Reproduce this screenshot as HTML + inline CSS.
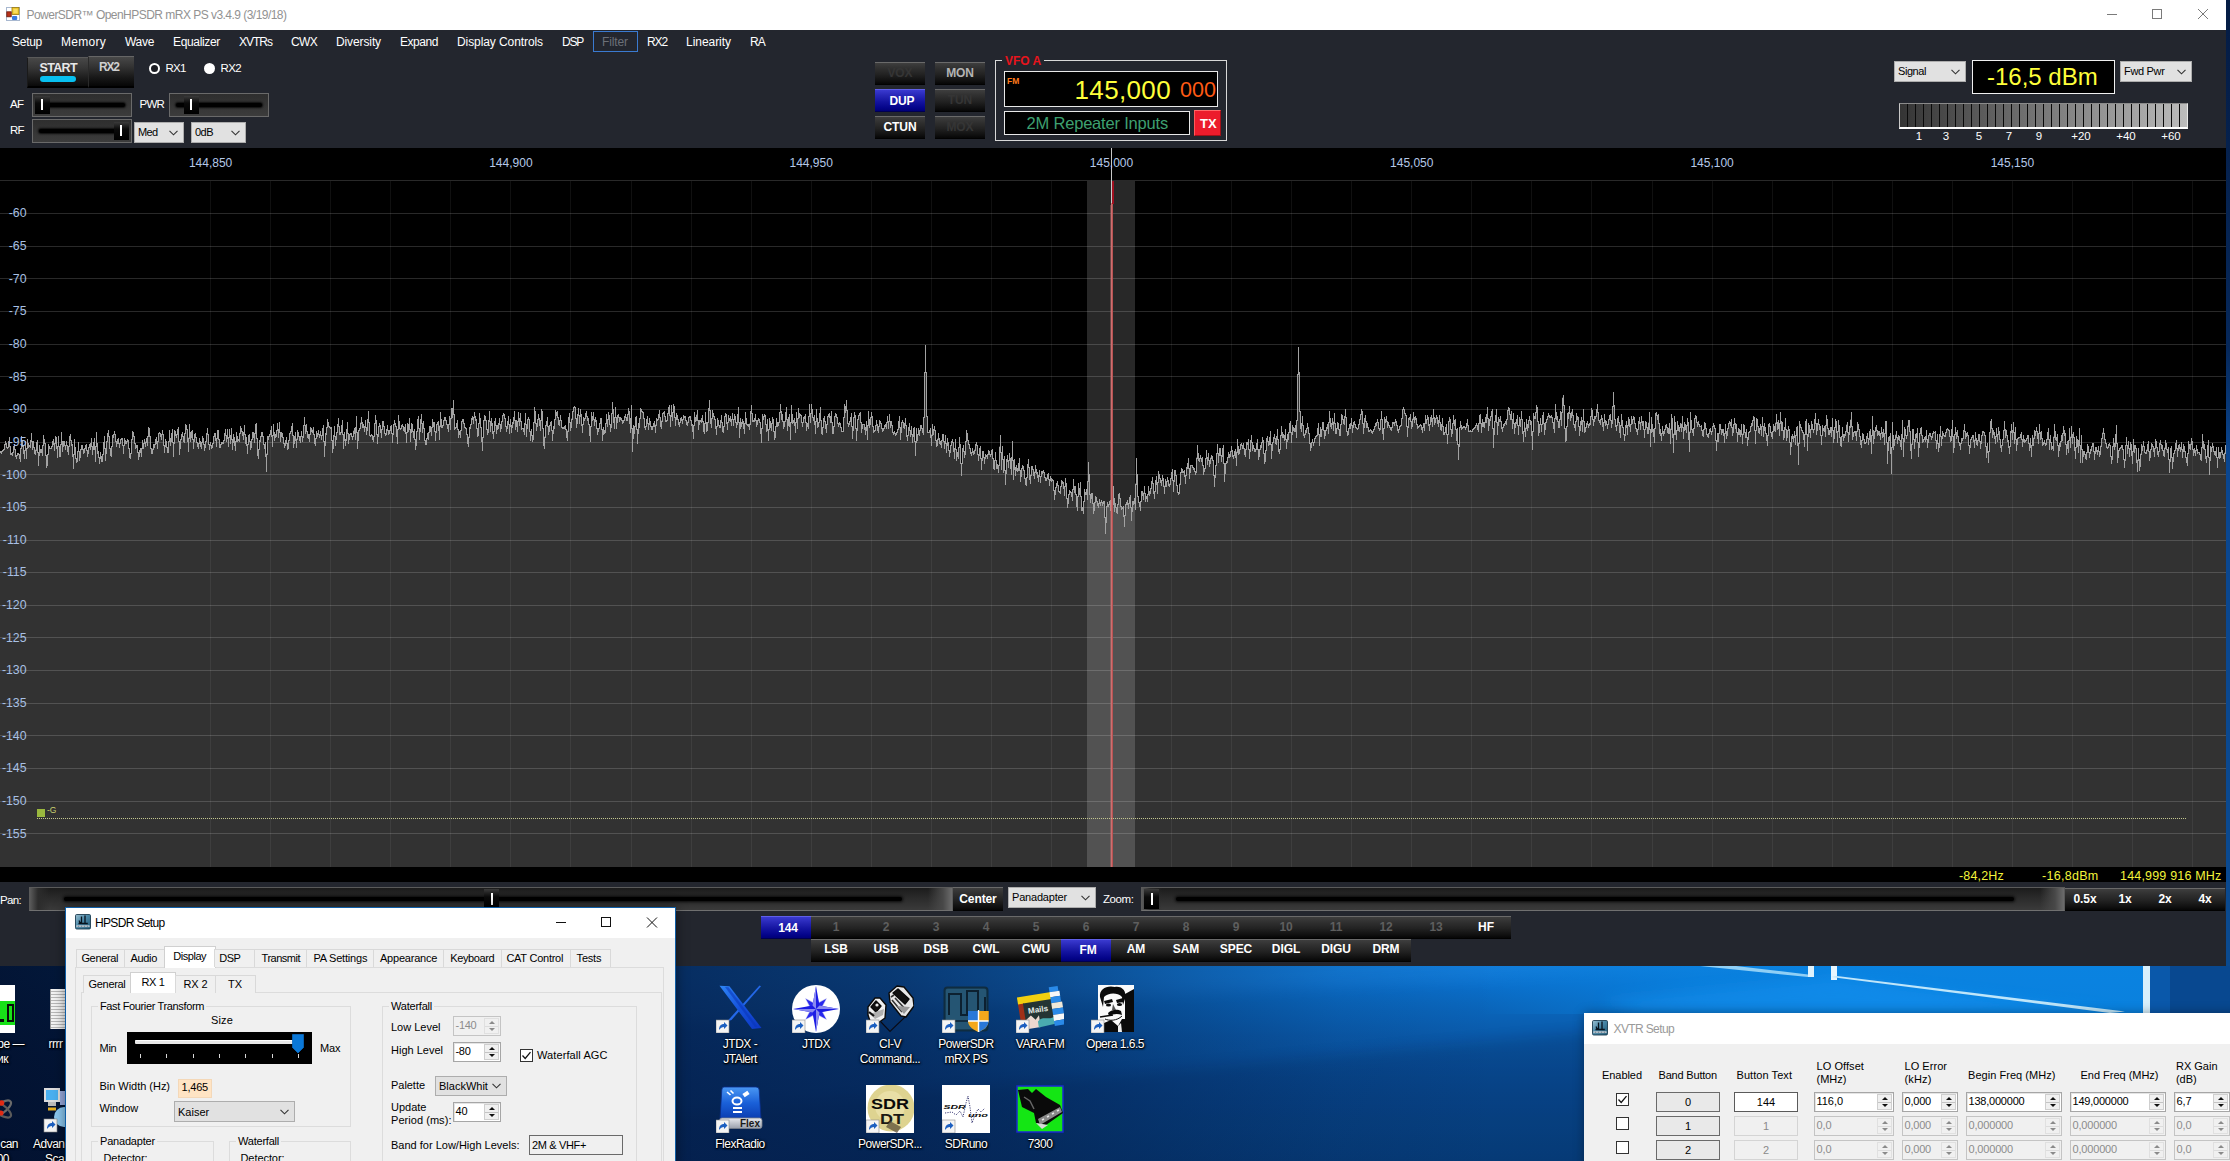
<!DOCTYPE html>
<html lang="en"><head><meta charset="utf-8"><title>PowerSDR</title>
<style>
*{box-sizing:border-box;margin:0;padding:0}
html,body{width:2230px;height:1161px;overflow:hidden}
body{position:relative;font-family:"Liberation Sans",sans-serif;font-size:12px;background:#0a4a9a;color:#000}
.a{position:absolute}
.t{position:absolute;white-space:nowrap;line-height:1}
#desk{left:0;top:0;width:2230px;height:1161px}
#main{left:0;top:0;width:2226px;height:966px;background:#23262e;overflow:hidden}
#tbar{left:0;top:0;width:2226px;height:30px;background:#fff}
.menu{color:#fff;font-size:12.5px;top:35px;text-shadow:0 0 1px rgba(255,255,255,.25)}
.lbl{color:#fff;font-size:12px}
.btn{position:absolute;background:linear-gradient(#3e3e3e 0%,#303030 25%,#222 55%,#101010 85%,#060606 100%);color:#fff;font-weight:bold;font-size:12px;text-align:center;border-top:1px solid #6a6a6a;border-bottom:1px solid #020202;white-space:nowrap;overflow:hidden;letter-spacing:-0.1px}
.btn.off{color:#353535}
.btn.dim{color:#5e5e5e}
.btn.mid{color:#b4b4b4}
.btn.blue{background:linear-gradient(#3a3ad0 0%,#2828b8 25%,#1414a0 55%,#04048a 85%,#000078 100%);border-top-color:#6060e8;border-bottom-color:#000050}
.btn.blue{padding-left:4px;padding-top:1px}
.btn.sep{border-left:1px solid #2c2c2c;border-right:1px solid #0a0a0a}
.sld{position:absolute;background:linear-gradient(#2e2e2e,#3c3c3c);border:1px solid #6a6a6a}
.sld i{position:absolute;left:6px;right:6px;top:50%;height:4px;margin-top:-2px;background:#000;border-radius:2px;box-shadow:0 0 2px 1px #0c0c0c}
.sld b{position:absolute;top:2px;bottom:2px;width:15px;background:linear-gradient(#3a3a3a,#0a0a0a 40%,#000)}
.sld b:after{content:"";position:absolute;left:6px;top:3px;bottom:4px;width:2px;background:#fff}
.cmb{position:absolute;background:#e1e1e1;border:1px solid #adadad;color:#000;font-size:11px;line-height:1}
.cmb span{position:absolute;left:3px;top:50%;transform:translateY(-50%);white-space:nowrap}
.cmb svg{position:absolute;right:5px;top:50%;margin-top:-3px}
.win{position:absolute;background:#f0f0f0}
.wt{position:absolute;left:0;top:0;right:0;height:30px;background:#fff}
.f11{font-size:11px}
.grp{position:absolute;border:1px solid #dcdcdc}
.grp>em{position:absolute;top:-8px;left:7px;background:#f0f0f0;padding:0 2px;font-style:normal;font-size:12px;line-height:14px;white-space:nowrap}
.spin{position:absolute;background:#fff;border:1px solid #a6a6a6;box-shadow:inset 1px 1px 0 #e4e4e4;font-size:11px}
.spin.dis{background:#f0f0f0;border-color:#c4c4c4;color:#8c8c8c;box-shadow:none}
.spin span{position:absolute;left:2px;top:50%;transform:translateY(-50%);white-space:nowrap}
.spin u{position:absolute;right:1px;top:1px;bottom:1px;width:15px;border:1px solid #cfcfcf;text-decoration:none;background:linear-gradient(#f0f0f0 0,#f0f0f0 7px,#c4c4c4 7px,#c4c4c4 8px,#f0f0f0 8px)}
.spin u:before,.spin u:after{content:"";position:absolute;left:3.5px;border:3px solid transparent}
.spin u:before{top:2px;border-bottom:3.5px solid #111;border-top:0}
.spin u:after{bottom:2px;border-top:3.5px solid #111;border-bottom:0}
.spin.dis u{border-color:#e0e0e0;background:linear-gradient(#f0f0f0 0,#f0f0f0 7px,#dcdcdc 7px,#dcdcdc 8px,#f0f0f0 8px)}
.spin.dis u:before{border-bottom-color:#8a8a8a}
.spin.dis u:after{border-top-color:#8a8a8a}
.chk{position:absolute;width:13px;height:13px;background:#fff;border:1px solid #333}
.tab{position:absolute;border:1px solid #d9d9d9;border-bottom:none;background:#f0f0f0;font-size:12px;text-align:center;white-space:nowrap}
.tab.sel{background:#fff;border-color:#d0d0d0}
.ico{position:absolute;width:48px;height:48px}
.il{position:absolute;color:#fff;font-size:12px;letter-spacing:-0.5px;text-align:center;width:90px;line-height:15px;text-shadow:1px 1px 2px #000,0 0 3px #000,0 1px 1px #000}
</style></head>
<body>

<svg class="a" id="desk" width="2230" height="1161" viewBox="0 0 2230 1161">
<defs>
<linearGradient id="dv" x1="0" y1="966" x2="0" y2="1161" gradientUnits="userSpaceOnUse">
<stop offset="0" stop-color="#0a76d4"/><stop offset="0.09" stop-color="#0a70cc"/><stop offset="0.2" stop-color="#0a66bc"/><stop offset="0.36" stop-color="#0a5aaa"/><stop offset="0.6" stop-color="#094e98"/><stop offset="1" stop-color="#084484"/></linearGradient>
<linearGradient id="dh" x1="0" y1="0" x2="2230" y2="0" gradientUnits="userSpaceOnUse">
<stop offset="0" stop-color="#020e2a" stop-opacity="0.93"/><stop offset="0.04" stop-color="#020e2a" stop-opacity="0.9"/><stop offset="0.3" stop-color="#041a44" stop-opacity="0.8"/><stop offset="0.4" stop-color="#041a44" stop-opacity="0.68"/><stop offset="0.47" stop-color="#041a44" stop-opacity="0.5"/><stop offset="0.53" stop-color="#041a44" stop-opacity="0.3"/><stop offset="0.6" stop-color="#041a44" stop-opacity="0.1"/><stop offset="0.67" stop-color="#041a44" stop-opacity="0"/></linearGradient>
<linearGradient id="dr" x1="1480" y1="0" x2="1850" y2="0" gradientUnits="userSpaceOnUse">
<stop offset="0" stop-color="#0a84e2" stop-opacity="0"/><stop offset="0.6" stop-color="#0a84e2" stop-opacity="0.7"/><stop offset="1" stop-color="#0a84e2" stop-opacity="0.9"/></linearGradient>
<filter id="b8" x="-5%" y="-50%" width="110%" height="200%"><feGaussianBlur stdDeviation="7"/></filter>
<filter id="b1"><feGaussianBlur stdDeviation="0.7"/></filter>
</defs>
<rect width="2230" height="1161" fill="#084484"/>
<rect y="940" width="2230" height="221" fill="url(#dv)"/>
<polygon points="500,900 1900,900 1900,958 500,1030" fill="#49a8ff" opacity="0.13" filter="url(#b8)"/>
<polygon points="500,1130 1700,1022 1700,1300 500,1300" fill="#021030" opacity="0.16" filter="url(#b8)"/>
<rect x="1380" y="940" width="770" height="74" fill="url(#dr)"/>
<rect y="940" width="2230" height="221" fill="url(#dh)"/>
<polygon points="1833,978 2123,1013 1640,1013 1600,1000" fill="#1894f4" opacity="0.45" filter="url(#b8)"/>
<polygon points="1736,966 1808,974.5 1808,977 1700,966" fill="#9fd8f8" opacity="0.9" filter="url(#b1)"/>
<rect x="1808" y="966" width="6" height="11" fill="#dff2fc"/>
<rect x="1831" y="966" width="6" height="14" fill="#e8f6fe"/>
<polygon points="1831,977 1837,976 2125,1011.5 2110,1013" fill="#bfe6fa" filter="url(#b1)"/>
<rect x="2143" y="966" width="7" height="48" fill="#d8f0fc"/>
<rect x="2150" y="966" width="80" height="48" fill="#0a58aa"/>
<rect x="2170" y="966" width="60" height="48" fill="#084890"/>
<linearGradient id="rs" x1="0" y1="0" x2="0" y2="966" gradientUnits="userSpaceOnUse"><stop offset="0" stop-color="#051c44"/><stop offset="0.36" stop-color="#06285a"/><stop offset="0.47" stop-color="#0a4690"/><stop offset="1" stop-color="#0a4a90"/></linearGradient>
<rect x="2226" y="0" width="4" height="966" fill="url(#rs)"/>
</svg>
<svg class="ico" style="left:716px;top:985px" width="48" height="48" viewBox="0 0 48 48"><defs><linearGradient id="jx" x1="0" y1="0" x2="1" y2="1"><stop offset="0" stop-color="#2f86f6"/><stop offset="0.5" stop-color="#1552dc"/><stop offset="1" stop-color="#0d37c4"/></linearGradient></defs><path d="M43.500 0.500 L45 1.200 L15.500 35 L11 36.500 Z" fill="#2468e8"/><path d="M3.500 0.800 L13.500 1.300 L45.500 43 L36 44 Z" fill="url(#jx)"/><path d="M9 2 L12.500 2.200 L41.500 41.500 L39 42 Z" fill="#0a34b8" opacity="0.55"/><g transform="translate(0,35)"><rect width="13" height="13" fill="#f4f4f4" stroke="#8a8a8a" stroke-width="0.6"/><path d="M3 10 C3 6 5 4 8 4 L8 2 L11.5 5.5 L8 9 L8 7 C6 7 4.5 8 3 10Z" fill="#1c5fc0"/></g></svg>
<div class="il" style="left:695px;top:1037px">JTDX -<br>JTAlert</div>
<svg class="ico" style="left:792px;top:985px" width="48" height="48" viewBox="0 0 48 48"><circle cx="24" cy="24" r="24" fill="#fff"/><path d="M24 9 L27 17 L35 13 L31 21 L39 24 L31 27 L35 35 L27 31 L24 39 L21 31 L13 35 L17 27 L9 24 L17 21 L13 13 L21 17Z" fill="#b4b4f2"/><path d="M14 14 L23 19 L19 23Z M34 14 L29 23 L25 19Z M34 34 L25 29 L29 25Z M14 34 L19 25 L23 29Z" fill="#2828ee"/><path d="M24 1 L27.500 20.500 L47 24 L27.500 27.500 L24 47 L20.500 27.500 L1 24 L20.500 20.500Z" fill="#1c1ce4"/><path d="M24 1 L24 24 L20.500 20.500Z M47 24 L24 24 L27.500 20.500Z M24 47 L24 24 L27.500 27.500Z M1 24 L24 24 L20.500 27.500Z" fill="#8a8af0"/><g transform="translate(0,35)"><rect width="13" height="13" fill="#f4f4f4" stroke="#8a8a8a" stroke-width="0.6"/><path d="M3 10 C3 6 5 4 8 4 L8 2 L11.5 5.5 L8 9 L8 7 C6 7 4.5 8 3 10Z" fill="#1c5fc0"/></g></svg>
<div class="il" style="left:771px;top:1037px">JTDX</div>
<svg class="ico" style="left:866px;top:985px" width="48" height="48" viewBox="0 0 48 48"><path d="M15 37 L24 46.500 L40 31" fill="none" stroke="#0a0a14" stroke-width="1.1"/><g stroke="#0a0a0a" stroke-width="1.4" stroke-linejoin="round"><path d="M23 8 L31 1 L38 2 L47 13 L48 21 L40 32 L35 31 L24 17Z" fill="#e8e8e8"/><path d="M27 8 L32 4 L43 14 L39 19Z" fill="#111"/><path d="M26 15 L36 27 M29 13 L40 25 M25 12 L28 10" stroke="#333" stroke-width="1.6"/><path d="M31 21 L38 29 L44 22" fill="#9a9a9a" stroke="none"/><path d="M2 22 L9 13 L14 13 L20 20 L19 33 L12 38 L4 36 L2 30Z" fill="#f0f0f0"/><path d="M5 22 L10 16 L15 21 L10 27Z" fill="#111"/><circle cx="11" cy="20" r="1.6" fill="#e8e8e8" stroke="none"/><path d="M4 29 L9 34 L17 30 L18 24" fill="#b0b0b0" stroke="none"/><path d="M3 27 L8 31" stroke="#111" stroke-width="2.2"/></g><g transform="translate(0,35)"><rect width="13" height="13" fill="#f4f4f4" stroke="#8a8a8a" stroke-width="0.6"/><path d="M3 10 C3 6 5 4 8 4 L8 2 L11.5 5.5 L8 9 L8 7 C6 7 4.5 8 3 10Z" fill="#1c5fc0"/></g></svg>
<div class="il" style="left:845px;top:1037px">CI-V<br>Command...</div>
<svg class="ico" style="left:942px;top:985px" width="48" height="48" viewBox="0 0 48 48"><rect x="2.500" y="2.500" width="43" height="43" rx="3" fill="#1f4c68" stroke="#0f2c40" stroke-width="2"/><rect x="4" y="4" width="40" height="40" rx="2" fill="#2a5c7c" opacity="0.6"/><path d="M7 30 L7 9 L19 9 L19 30 L25 30 L25 6 L36 6 L36 30 L43 30 L43 12" fill="none" stroke="#0c2030" stroke-width="2"/><path d="M7 36 L43 36" stroke="#0c2030" stroke-width="1.500"/><path d="M26 26 L46.500 26 L46.500 36 C46.500 42 41 45 36.500 47 C32 45 26 42 26 36Z" fill="#f4a81c"/><path d="M36.500 26 L46.500 26 L46.500 36 L36.500 36Z" fill="#f4a81c"/><path d="M26 26 L36.500 26 L36.500 36 L26 36Z" fill="#2a78d8"/><path d="M36.500 36 L46.500 36 C46.500 42 41 45 36.500 47Z" fill="#2a78d8"/><path d="M36.500 25 L36.500 47 M26 36 L46.500 36" stroke="#fff" stroke-width="1.400"/><g transform="translate(0,35)"><rect width="13" height="13" fill="#f4f4f4" stroke="#8a8a8a" stroke-width="0.6"/><path d="M3 10 C3 6 5 4 8 4 L8 2 L11.5 5.5 L8 9 L8 7 C6 7 4.5 8 3 10Z" fill="#1c5fc0"/></g></svg>
<div class="il" style="left:921px;top:1037px">PowerSDR<br>mRX PS</div>
<svg class="ico" style="left:1016px;top:985px" width="48" height="48" viewBox="0 0 48 48"><g transform="rotate(-9 24 24)"><rect x="3" y="9" width="36" height="8" fill="#f2d010"/><rect x="3" y="16" width="6" height="22" fill="#a03018"/><rect x="8" y="16" width="29" height="19" fill="#243434"/><path d="M8 33 L14 29 L18 34 L22 30 L22 42 L8 42Z" fill="#ecd8d0"/><path d="M20 36 C26 30 32 38 38 33 L38 41 L20 42Z" fill="#4aacb0"/><rect x="36" y="4" width="9" height="5" fill="#2a8ae8"/><rect x="36" y="9" width="10" height="5" fill="#f8f8f8"/><rect x="36" y="14" width="10" height="6" fill="#2a8ae8"/><rect x="36" y="20" width="11" height="6" fill="#f0e8d8"/><rect x="36" y="26" width="11" height="6" fill="#2a8ae8"/><rect x="36" y="32" width="12" height="6" fill="#f8f8f8"/><rect x="36" y="38" width="12" height="5" fill="#2a8ae8"/><text x="12" y="27" font-family="Liberation Sans,sans-serif" font-size="8" font-weight="bold" fill="#e4ece8">Mails</text></g><g transform="translate(0,35)"><rect width="13" height="13" fill="#f4f4f4" stroke="#8a8a8a" stroke-width="0.6"/><path d="M3 10 C3 6 5 4 8 4 L8 2 L11.5 5.5 L8 9 L8 7 C6 7 4.5 8 3 10Z" fill="#1c5fc0"/></g></svg>
<div class="il" style="left:995px;top:1037px">VARA FM</div>
<svg class="ico" style="left:1091px;top:985px" width="48" height="48" viewBox="0 0 48 48"><rect x="7" y="0" width="36" height="47" fill="#fafafa"/><path d="M34 9 L43 4 L43 47 L34 47Z" fill="#0a0a0a"/><path d="M9 12 C8 4 16 0 24 2 C31 1 36 6 34 14 L32 20 L31 12 C26 7 17 8 13 12 L12 22Z" fill="#0a0a0a"/><path d="M13 16 L21 14 L22 17 L14 19Z M25 15 L32 13 L33 17 L26 18Z" fill="#0a0a0a"/><ellipse cx="17.500" cy="20" rx="2.600" ry="1.500" fill="#0a0a0a"/><ellipse cx="28.500" cy="19.500" rx="2.600" ry="1.500" fill="#0a0a0a"/><path d="M22 19 L21 25 L25 25Z" fill="#555"/><path d="M17 28 C21 24 27 24 30 26 L31 30 C26 28 22 29 18 31Z" fill="#0a0a0a"/><path d="M9 32 L22 30" stroke="#0a0a0a" stroke-width="1.600"/><path d="M14 34 C18 36 26 36 31 31" fill="none" stroke="#0a0a0a" stroke-width="1"/><path d="M12 47 L13 38 L20 35 L27 41 L31 34 L34 34 L34 47Z" fill="#0a0a0a"/><path d="M27 41 L30 38 L31 47 L27 47Z" fill="#eee"/><g transform="translate(0,35)"><rect width="13" height="13" fill="#f4f4f4" stroke="#8a8a8a" stroke-width="0.6"/><path d="M3 10 C3 6 5 4 8 4 L8 2 L11.5 5.5 L8 9 L8 7 C6 7 4.5 8 3 10Z" fill="#1c5fc0"/></g></svg>
<div class="il" style="left:1070px;top:1037px">Opera 1.6.5</div>
<svg class="ico" style="left:716px;top:1085px" width="48" height="48" viewBox="0 0 48 48"><defs><linearGradient id="fx" x1="0" y1="0" x2="0" y2="1"><stop offset="0" stop-color="#4a98f4"/><stop offset="0.5" stop-color="#1a60d8"/><stop offset="1" stop-color="#0a3cb0"/></linearGradient><linearGradient id="fs" x1="0" y1="0" x2="0" y2="1"><stop offset="0" stop-color="#e8eaee"/><stop offset="1" stop-color="#9aa0ac"/></linearGradient></defs><path d="M8 2 H40 Q43 2 43.200 5 L45 34 H4 L5.800 5 Q6 2 8 2Z" fill="url(#fx)" stroke="#0a2c88" stroke-width="0.8"/><ellipse cx="21" cy="16" rx="4.500" ry="3.500" fill="none" stroke="#fff" stroke-width="2"/><path d="M11 7 L14.500 10 M14.500 5.500 L17.500 8.500" stroke="#fff" stroke-width="1.600"/><rect x="27" y="7" width="6" height="4" fill="#fff" transform="rotate(-35 30 9)"/><rect x="17" y="22" width="9" height="2" fill="#fff"/><rect x="17" y="26" width="9" height="2" fill="#fff"/><rect x="3.500" y="33" width="42.500" height="10.500" rx="2.500" fill="url(#fs)" stroke="#7a808c" stroke-width="0.8"/><text x="44" y="42" text-anchor="end" font-family="Liberation Sans,sans-serif" font-size="10" font-weight="bold" fill="#1a1a1a">Flex</text><g transform="translate(0,35)"><rect width="13" height="13" fill="#f4f4f4" stroke="#8a8a8a" stroke-width="0.6"/><path d="M3 10 C3 6 5 4 8 4 L8 2 L11.5 5.5 L8 9 L8 7 C6 7 4.5 8 3 10Z" fill="#1c5fc0"/></g></svg>
<div class="il" style="left:695px;top:1137px">FlexRadio</div>
<svg class="ico" style="left:866px;top:1085px" width="48" height="48" viewBox="0 0 48 48"><rect width="48" height="48" fill="#fff"/><circle cx="25" cy="23" r="23.500" fill="#ded390"/><circle cx="24" cy="21" r="15" fill="#e9dfa6"/><text x="5" y="23.500" font-family="Liberation Sans,sans-serif" font-size="15" font-weight="bold" fill="#0a0a0a" textLength="38" lengthAdjust="spacingAndGlyphs">SDR</text><text x="14" y="39" font-family="Liberation Sans,sans-serif" font-size="15" font-weight="bold" fill="#1c1a14" textLength="24" lengthAdjust="spacingAndGlyphs">DT</text><path d="M24 36 L35 42 L31 48 L20 42Z" fill="#5c5038" opacity="0.75"/><g transform="translate(0,35)"><rect width="13" height="13" fill="#f4f4f4" stroke="#8a8a8a" stroke-width="0.6"/><path d="M3 10 C3 6 5 4 8 4 L8 2 L11.5 5.5 L8 9 L8 7 C6 7 4.5 8 3 10Z" fill="#1c5fc0"/></g></svg>
<div class="il" style="left:845px;top:1137px">PowerSDR...</div>
<svg class="ico" style="left:942px;top:1085px" width="48" height="48" viewBox="0 0 48 48"><rect width="48" height="48" fill="#fff"/><path d="M3 28 L10 27 L14 30 L18 26 L21 32 L24 18 L26 11 L28 22 L30 38 L33 30 L36 24 L39 27 L43 23" fill="none" stroke="#2a2a6a" stroke-width="0.9" stroke-dasharray="1.2 1.2"/><text x="1.500" y="23.500" font-family="Liberation Sans,sans-serif" font-size="5.500" font-weight="bold" font-style="italic" fill="#0a0a0a" textLength="22" lengthAdjust="spacingAndGlyphs">SDR</text><text x="26" y="32" font-family="Liberation Sans,sans-serif" font-size="6" font-weight="bold" font-style="italic" fill="#0a0a0a" textLength="20" lengthAdjust="spacingAndGlyphs">uno</text><g transform="translate(0,35)"><rect width="13" height="13" fill="#f4f4f4" stroke="#8a8a8a" stroke-width="0.6"/><path d="M3 10 C3 6 5 4 8 4 L8 2 L11.5 5.5 L8 9 L8 7 C6 7 4.5 8 3 10Z" fill="#1c5fc0"/></g></svg>
<div class="il" style="left:921px;top:1137px">SDRuno</div>
<svg class="ico" style="left:1016px;top:1085px" width="48" height="48" viewBox="0 0 48 48"><rect x="1" y="1" width="46" height="46" fill="#14e614" stroke="#1a2ad0" stroke-width="1.500"/><path d="M2 5 L12 4 L16 8 L20 4 L30 12 L44 20 L47 28 L30 40 L20 38 L18 28 L6 22Z" fill="#0a0a0a"/><path d="M22 34 L44 22 L46 27 L24 40Z" fill="#8a8a8a"/><path d="M26 35 L28 34 M31 32 L33 31 M36 29 L38 28 M41 26 L43 25" stroke="#e8e8e8" stroke-width="1.600"/><path d="M20 38 L26 44 L32 40" fill="#d8d8d8"/><path d="M8 12 L14 16 L18 24" stroke="#666" stroke-width="1.500" fill="none"/></svg>
<div class="il" style="left:995px;top:1137px">7300</div>
<div class="a" style="left:0;top:985px;width:15px;height:48px;background:#fff"></div>
<div class="a" style="left:0;top:1001px;width:15px;height:24px;background:#18e018"></div>
<div class="a" style="left:0;top:1019px;width:4px;height:3px;background:#0a0a0a"></div>
<div class="a" style="left:6.500px;top:1004px;width:7px;height:18px;border:2px solid #0a0a0a"></div>
<div class="il" style="left:-66px;top:1037px;width:90px;text-align:right">pe —</div>
<div class="il" style="left:-82px;top:1052px;width:90px;text-align:right">ик</div>
<div class="a" style="left:50px;top:989px;width:16px;height:40px;background:repeating-linear-gradient(#f4f4f4 0 2px,#b8b8b8 2px 3px);border-left:1px solid #999"></div>
<div class="il" style="left:48.500px;top:1037px;width:40px;text-align:left">rrrr</div>
<svg class="a" style="left:0;top:1094px" width="14" height="30" viewBox="0 0 14 30"><ellipse cx="0" cy="15" rx="13" ry="5" fill="none" stroke="#6a6a6a" stroke-width="2.200" transform="rotate(-35 0 15)"/><ellipse cx="0" cy="15" rx="13" ry="5" fill="none" stroke="#5a5a5a" stroke-width="2.200" transform="rotate(35 0 15)"/><circle cx="1.500" cy="9" r="2.800" fill="#e02a14"/><circle cx="1" cy="19" r="2.600" fill="#e02a14"/></svg>
<div class="il" style="left:-72px;top:1137px;width:90px;text-align:right">can</div>
<div class="il" style="left:-81px;top:1152px;width:90px;text-align:right">00</div>
<svg class="a" style="left:42px;top:1087px" width="24" height="46" viewBox="0 0 24 46"><rect x="3" y="2" width="14" height="12" fill="#4ab0f0" stroke="#ddd" stroke-width="2"/><rect x="6" y="15" width="8" height="4" fill="#bbb"/><path d="M18 4 L24 4 L24 18 L18 18Z" fill="#9ad"/><circle cx="22" cy="30" r="10" fill="#8cc8f0"/><path d="M6 22 L14 22" stroke="#e8b020" stroke-width="3"/><rect x="2" y="32" width="13" height="13" fill="#f4f4f4" stroke="#888" stroke-width="0.6"/><path d="M5 42 C5 38 7 36 10 36 L10 34 L13.500 37.500 L10 41 L10 39 C8 39 6.500 40 5 42Z" fill="#1c5fc0"/></svg>
<div class="il" style="left:33px;top:1137px;width:60px;text-align:left">Advan</div>
<div class="il" style="left:45px;top:1152px;width:60px;text-align:left">Sca</div>
<div class="a" id="main">
<svg class="a" style="left:0;top:0" width="2226" height="890" viewBox="0 0 2226 890" shape-rendering="crispEdges">
<rect x="0" y="148" width="2226" height="734" fill="#000"/>
<polygon points="0,867 0,450.5 1,453.2 2,449.7 3,450.0 4,447.7 5,440.5 6,445.3 7,448.0 8,445.3 9,437.1 10,454.2 11,453.1 12,454.6 13,448.8 14,443.6 15,454.4 16,458.0 17,452.6 18,453.1 19,454.7 20,461.2 21,435.6 22,443.9 23,448.6 24,458.1 25,441.5 26,457.5 27,439.5 28,446.9 29,444.7 30,447.2 31,432.8 32,448.8 33,440.7 34,452.5 35,454.1 36,445.0 37,439.7 38,464.7 39,445.4 40,452.0 41,449.4 42,454.9 43,435.4 44,441.8 45,443.5 46,466.5 47,464.3 48,444.4 49,447.1 50,448.0 51,448.4 52,443.7 53,438.7 54,450.1 55,435.7 56,439.0 57,456.7 58,435.7 59,456.2 60,455.9 61,432.0 62,450.9 63,441.9 64,441.1 65,448.6 66,440.8 67,448.9 68,453.9 69,437.5 70,433.9 71,445.4 72,443.5 73,468.4 74,439.2 75,455.1 76,461.7 77,460.3 78,442.4 79,460.3 80,452.8 81,444.8 82,445.2 83,452.7 84,451.6 85,445.4 86,444.0 87,456.3 88,450.0 89,444.1 90,449.0 91,437.8 92,453.5 93,445.4 94,438.2 95,460.7 96,432.2 97,453.0 98,450.8 99,462.7 100,452.4 101,460.4 102,460.8 103,447.6 104,436.3 105,459.9 106,445.5 107,436.0 108,430.3 109,441.4 110,453.9 111,456.2 112,435.5 113,437.0 114,431.2 115,436.2 116,445.9 117,439.8 118,438.1 119,447.2 120,439.4 121,438.7 122,437.9 123,453.1 124,437.5 125,443.2 126,442.4 127,438.9 128,440.4 129,455.5 130,458.1 131,448.2 132,430.6 133,433.2 134,438.5 135,447.8 136,446.3 137,444.5 138,459.3 139,452.1 140,448.4 141,455.7 142,439.8 143,447.7 144,438.8 145,445.5 146,437.6 147,445.0 148,427.3 149,429.0 150,443.7 151,453.0 152,453.2 153,443.8 154,446.7 155,440.9 156,437.3 157,447.9 158,433.8 159,432.4 160,432.9 161,438.5 162,430.2 163,438.3 164,452.4 165,439.5 166,442.0 167,451.5 168,451.7 169,429.6 170,445.4 171,436.0 172,429.2 173,455.8 174,430.4 175,431.7 176,437.4 177,430.4 178,427.4 179,453.8 180,442.4 181,435.5 182,431.8 183,439.4 184,442.2 185,424.3 186,426.2 187,431.3 188,451.0 189,424.0 190,440.7 191,432.7 192,429.8 193,448.4 194,434.5 195,432.8 196,441.3 197,443.4 198,447.7 199,438.0 200,444.3 201,448.3 202,436.3 203,439.1 204,449.7 205,443.4 206,437.9 207,427.8 208,440.1 209,448.6 210,442.0 211,447.5 212,445.8 213,439.7 214,433.0 215,433.6 216,446.1 217,429.7 218,430.7 219,446.5 220,447.2 221,441.5 222,442.4 223,442.6 224,437.1 225,429.4 226,440.9 227,429.2 228,446.1 229,428.9 230,442.7 231,428.2 232,449.2 233,434.0 234,439.9 235,449.8 236,431.5 237,440.5 238,439.4 239,440.9 240,425.5 241,430.3 242,431.0 243,439.0 244,425.3 245,443.3 246,437.4 247,452.6 248,435.2 249,433.9 250,448.5 251,446.3 252,432.2 253,432.1 254,441.7 255,425.1 256,422.7 257,452.7 258,457.6 259,439.8 260,440.9 261,431.7 262,432.1 263,439.6 264,448.3 265,441.6 266,470.8 267,436.4 268,438.9 269,433.6 270,433.9 271,425.8 272,446.2 273,423.7 274,440.0 275,434.4 276,436.2 277,422.9 278,436.8 279,421.7 280,441.5 281,431.5 282,434.6 283,439.4 284,446.9 285,443.7 286,436.5 287,448.9 288,446.2 289,433.8 290,433.0 291,428.8 292,423.4 293,447.1 294,439.8 295,432.5 296,447.3 297,429.9 298,434.3 299,438.5 300,442.4 301,430.5 302,440.6 303,433.2 304,417.4 305,433.4 306,424.5 307,436.6 308,434.3 309,441.2 310,427.4 311,429.5 312,432.3 313,426.8 314,440.9 315,444.6 316,430.8 317,435.7 318,430.5 319,437.2 320,431.3 321,438.7 322,431.6 323,425.0 324,456.4 325,432.9 326,434.4 327,419.2 328,425.5 329,425.9 330,428.4 331,427.2 332,452.4 333,444.0 334,426.3 335,444.9 336,433.8 337,429.3 338,418.1 339,434.3 340,433.9 341,430.3 342,420.0 343,447.9 344,432.4 345,444.9 346,436.0 347,422.2 348,443.3 349,434.3 350,433.6 351,433.0 352,438.7 353,433.6 354,427.5 355,438.8 356,416.1 357,447.8 358,431.4 359,428.3 360,427.9 361,417.3 362,427.4 363,423.6 364,430.8 365,420.4 366,434.4 367,426.5 368,411.1 369,433.4 370,436.4 371,433.5 372,436.8 373,440.7 374,431.8 375,414.7 376,424.8 377,442.7 378,428.3 379,423.5 380,427.1 381,436.8 382,421.1 383,421.3 384,431.3 385,434.9 386,433.3 387,424.9 388,434.1 389,431.9 390,427.3 391,424.9 392,441.7 393,427.0 394,420.5 395,424.7 396,428.2 397,443.4 398,415.0 399,427.9 400,429.0 401,427.3 402,423.7 403,428.5 404,431.3 405,423.5 406,441.7 407,423.0 408,431.3 409,417.6 410,440.7 411,423.3 412,425.5 413,437.1 414,428.8 415,449.4 416,440.3 417,422.3 418,415.9 419,439.2 420,423.3 421,414.2 422,432.1 423,420.8 424,435.1 425,444.0 426,443.9 427,432.7 428,439.0 429,426.0 430,426.2 431,434.9 432,418.6 433,426.1 434,422.5 435,439.7 436,425.2 437,422.5 438,420.6 439,439.4 440,411.9 441,426.0 442,427.3 443,422.1 444,417.2 445,416.7 446,422.7 447,425.5 448,431.2 449,416.5 450,428.5 451,408.4 452,417.1 453,399.7 454,429.1 455,427.5 456,425.8 457,420.1 458,437.1 459,430.6 460,436.9 461,422.3 462,418.8 463,419.3 464,426.1 465,427.7 466,427.8 467,439.9 468,446.0 469,427.1 470,428.1 471,420.0 472,415.7 473,422.8 474,412.0 475,419.9 476,419.2 477,436.2 478,433.1 479,412.7 480,422.9 481,432.0 482,450.1 483,423.7 484,415.4 485,416.7 486,423.1 487,434.2 488,429.8 489,410.7 490,431.2 491,418.5 492,428.1 493,438.2 494,423.7 495,417.6 496,432.7 497,424.8 498,427.9 499,418.1 500,430.7 501,424.6 502,416.9 503,412.8 504,415.5 505,420.4 506,430.6 507,425.3 508,415.8 509,432.7 510,419.0 511,431.9 512,422.3 513,422.9 514,411.3 515,429.3 516,420.4 517,430.7 518,411.5 519,424.6 520,413.5 521,428.7 522,427.9 523,428.5 524,433.8 525,412.9 526,435.8 527,420.9 528,417.3 529,421.6 530,440.3 531,428.8 532,440.9 533,436.3 534,407.2 535,415.6 536,430.2 537,422.8 538,414.4 539,420.6 540,430.3 541,408.9 542,413.5 543,441.8 544,447.7 545,425.4 546,423.9 547,417.2 548,434.1 549,427.1 550,423.5 551,421.2 552,439.7 553,426.3 554,427.7 555,409.8 556,414.8 557,411.5 558,422.8 559,425.2 560,415.4 561,424.8 562,428.3 563,426.8 564,427.9 565,424.6 566,433.2 567,440.4 568,420.7 569,413.4 570,430.1 571,423.5 572,413.7 573,408.7 574,405.9 575,408.4 576,426.7 577,419.5 578,408.1 579,422.7 580,409.0 581,419.2 582,431.7 583,417.0 584,419.8 585,415.7 586,411.0 587,420.3 588,418.1 589,429.2 590,440.6 591,412.3 592,420.5 593,412.5 594,424.7 595,417.3 596,422.7 597,433.9 598,428.6 599,427.3 600,417.8 601,418.0 602,440.1 603,427.4 604,432.7 605,432.1 606,414.2 607,426.3 608,412.2 609,417.0 610,430.6 611,424.4 612,402.1 613,415.1 614,428.1 615,406.9 616,427.8 617,415.2 618,414.1 619,420.8 620,417.3 621,418.1 622,422.6 623,422.0 624,418.0 625,413.5 626,420.0 627,420.4 628,408.5 629,414.2 630,431.5 631,404.6 632,451.1 633,424.8 634,433.4 635,418.1 636,416.1 637,442.9 638,423.0 639,427.4 640,408.3 641,410.6 642,412.2 643,411.7 644,424.9 645,429.0 646,422.6 647,416.0 648,429.1 649,418.3 650,423.1 651,429.0 652,428.7 653,423.9 654,421.3 655,431.5 656,417.8 657,420.1 658,417.9 659,410.0 660,423.6 661,428.0 662,413.2 663,412.4 664,411.3 665,420.9 666,421.4 667,418.9 668,408.1 669,405.0 670,426.0 671,405.3 672,420.0 673,403.6 674,409.1 675,424.6 676,413.2 677,416.8 678,422.1 679,425.6 680,418.6 681,416.5 682,422.5 683,414.8 684,417.4 685,415.7 686,423.5 687,425.2 688,417.9 689,416.6 690,415.7 691,424.6 692,424.4 693,438.1 694,412.5 695,421.4 696,418.6 697,410.4 698,428.7 699,420.1 700,420.0 701,422.4 702,414.5 703,428.1 704,433.2 705,412.5 706,431.3 707,429.2 708,415.6 709,400.2 710,419.1 711,426.9 712,409.8 713,415.3 714,415.8 715,421.3 716,434.0 717,417.6 718,423.0 719,427.5 720,426.2 721,414.5 722,429.1 723,432.1 724,419.4 725,413.0 726,415.9 727,429.3 728,415.2 729,420.0 730,415.8 731,425.3 732,413.0 733,424.5 734,414.2 735,417.0 736,426.7 737,421.2 738,407.3 739,437.4 740,417.6 741,426.3 742,419.2 743,422.5 744,433.3 745,412.5 746,423.9 747,425.0 748,423.5 749,429.0 750,418.0 751,404.6 752,420.6 753,420.1 754,421.3 755,414.1 756,425.6 757,423.2 758,417.7 759,420.8 760,423.6 761,442.2 762,414.4 763,419.4 764,413.5 765,416.8 766,431.1 767,419.2 768,440.1 769,418.5 770,424.3 771,429.8 772,416.6 773,421.7 774,439.5 775,434.6 776,418.2 777,426.0 778,424.2 779,420.1 780,403.6 781,419.1 782,414.5 783,428.0 784,424.2 785,418.0 786,406.6 787,430.4 788,420.3 789,413.7 790,439.0 791,405.4 792,422.6 793,421.2 794,418.4 795,432.1 796,411.5 797,427.6 798,408.5 799,416.9 800,413.9 801,417.0 802,426.4 803,417.3 804,417.7 805,413.9 806,429.9 807,422.8 808,428.3 809,404.2 810,421.9 811,403.9 812,413.1 813,420.2 814,415.3 815,432.9 816,409.2 817,426.6 818,424.8 819,418.7 820,406.8 821,432.4 822,433.9 823,420.4 824,416.3 825,425.2 826,431.7 827,415.9 828,415.5 829,413.0 830,421.8 831,411.1 832,432.2 833,432.9 834,418.7 835,413.3 836,414.8 837,419.1 838,426.4 839,421.7 840,424.2 841,429.8 842,431.5 843,430.2 844,403.8 845,412.3 846,399.9 847,420.8 848,426.0 849,422.5 850,420.3 851,413.5 852,438.1 853,422.3 854,412.0 855,417.2 856,439.6 857,420.7 858,416.4 859,413.0 860,412.4 861,432.0 862,423.8 863,424.1 864,424.4 865,433.8 866,420.9 867,438.8 868,411.2 869,426.7 870,421.3 871,412.4 872,419.6 873,432.3 874,430.0 875,429.6 876,419.6 877,429.0 878,431.8 879,419.8 880,422.6 881,424.0 882,431.2 883,428.0 884,427.3 885,423.5 886,427.6 887,416.2 888,427.8 889,414.2 890,427.4 891,420.6 892,430.3 893,434.0 894,430.9 895,435.2 896,432.1 897,432.1 898,426.1 899,416.3 900,438.6 901,424.8 902,419.5 903,425.2 904,428.4 905,417.5 906,432.1 907,440.4 908,430.2 909,423.4 910,436.1 911,425.6 912,442.2 913,429.1 914,427.4 915,455.3 916,428.1 917,440.1 918,428.5 919,434.5 920,425.9 921,424.7 922,430.7 923,433.8 924,400.0 925,345.0 926,400.0 927,431.5 928,432.4 929,431.6 930,428.4 931,445.3 932,423.7 933,434.0 934,426.4 935,432.7 936,446.4 937,444.4 938,432.7 939,443.1 940,441.3 941,446.6 942,434.3 943,434.4 944,447.8 945,434.5 946,452.4 947,438.5 948,445.3 949,455.5 950,447.5 951,443.1 952,439.3 953,444.7 954,457.9 955,439.0 956,459.8 957,451.5 958,457.9 959,436.7 960,451.5 961,475.0 962,451.0 963,444.9 964,456.7 965,452.0 966,429.8 967,436.3 968,442.8 969,445.3 970,451.5 971,454.9 972,448.2 973,454.1 974,452.3 975,446.7 976,441.8 977,448.4 978,459.7 979,450.5 980,446.3 981,469.3 982,450.6 983,451.5 984,462.5 985,454.1 986,455.0 987,457.9 988,450.1 989,452.5 990,456.2 991,451.2 992,449.4 993,466.5 994,469.0 995,451.8 996,467.9 997,463.8 998,472.4 999,457.8 1000,435.4 1001,469.1 1002,445.6 1003,472.1 1004,456.2 1005,483.8 1006,462.1 1007,455.1 1008,466.9 1009,453.5 1010,462.5 1011,473.9 1012,440.9 1013,478.6 1014,459.2 1015,474.8 1016,464.5 1017,471.3 1018,468.2 1019,458.4 1020,481.5 1021,471.0 1022,465.4 1023,466.0 1024,473.4 1025,483.0 1026,485.4 1027,469.5 1028,459.5 1029,475.1 1030,482.7 1031,466.4 1032,465.6 1033,472.1 1034,477.7 1035,465.3 1036,472.5 1037,472.3 1038,480.9 1039,469.9 1040,481.9 1041,470.7 1042,473.4 1043,469.6 1044,473.6 1045,479.5 1046,479.9 1047,475.2 1048,473.4 1049,484.6 1050,475.6 1051,481.1 1052,479.3 1053,481.3 1054,498.7 1055,489.4 1056,485.3 1057,480.6 1058,490.1 1059,491.9 1060,492.7 1061,479.8 1062,482.8 1063,482.1 1064,494.5 1065,478.4 1066,487.7 1067,507.5 1068,498.6 1069,490.3 1070,491.5 1071,492.7 1072,499.5 1073,479.5 1074,492.3 1075,485.6 1076,502.0 1077,510.2 1078,482.6 1079,494.1 1080,481.9 1081,509.8 1082,506.9 1083,512.7 1084,488.9 1085,494.1 1086,489.4 1087,499.4 1088,462.0 1089,485.1 1090,502.4 1091,492.7 1092,493.7 1093,513.0 1094,507.5 1095,495.6 1096,498.9 1097,503.4 1098,506.8 1099,499.2 1100,505.2 1101,499.7 1102,504.6 1103,501.1 1104,500.7 1105,533.0 1106,510.5 1107,501.9 1108,505.8 1109,502.5 1110,500.2 1111,519.8 1112,521.3 1113,486.0 1114,510.6 1115,502.9 1116,510.7 1117,513.4 1118,494.4 1119,492.7 1120,503.8 1121,508.9 1122,507.9 1123,505.6 1124,526.3 1125,503.6 1126,504.3 1127,499.9 1128,507.8 1129,499.0 1130,494.6 1131,520.2 1132,501.1 1133,503.5 1134,497.6 1135,509.4 1136,458.0 1137,489.9 1138,501.6 1139,502.6 1140,510.3 1141,492.1 1142,490.8 1143,498.9 1144,486.1 1145,500.6 1146,495.7 1147,501.1 1148,486.1 1149,494.9 1150,490.2 1151,485.4 1152,477.0 1153,488.5 1154,497.5 1155,483.7 1156,476.5 1157,492.5 1158,471.1 1159,476.6 1160,479.4 1161,484.8 1162,474.9 1163,480.4 1164,492.6 1165,478.5 1166,485.5 1167,477.4 1168,483.0 1169,486.1 1170,481.0 1171,475.4 1172,469.1 1173,491.4 1174,469.8 1175,470.1 1176,480.5 1177,490.2 1178,494.4 1179,491.4 1180,475.6 1181,467.5 1182,470.8 1183,472.4 1184,470.0 1185,482.6 1186,466.8 1187,467.6 1188,458.1 1189,478.1 1190,465.4 1191,464.6 1192,464.5 1193,469.3 1194,468.5 1195,474.0 1196,470.0 1197,445.3 1198,460.4 1199,460.6 1200,455.3 1201,460.8 1202,456.9 1203,473.5 1204,469.1 1205,467.1 1206,449.6 1207,463.9 1208,453.2 1209,466.4 1210,459.8 1211,455.2 1212,456.9 1213,463.5 1214,486.2 1215,467.7 1216,462.5 1217,444.4 1218,462.4 1219,448.2 1220,448.6 1221,461.0 1222,451.5 1223,445.1 1224,480.8 1225,466.2 1226,460.6 1227,462.0 1228,451.6 1229,456.9 1230,455.7 1231,446.3 1232,454.6 1233,458.3 1234,452.2 1235,448.9 1236,464.5 1237,439.0 1238,454.0 1239,452.6 1240,445.9 1241,443.0 1242,447.5 1243,443.3 1244,452.1 1245,456.2 1246,442.1 1247,444.2 1248,439.4 1249,457.7 1250,445.1 1251,434.8 1252,449.7 1253,444.6 1254,450.7 1255,451.1 1256,447.0 1257,438.8 1258,458.8 1259,452.9 1260,445.4 1261,446.9 1262,436.5 1263,442.5 1264,462.9 1265,459.5 1266,440.4 1267,435.7 1268,445.4 1269,443.4 1270,430.8 1271,457.8 1272,443.1 1273,440.0 1274,434.4 1275,441.9 1276,443.5 1277,429.3 1278,448.8 1279,452.9 1280,444.5 1281,426.5 1282,437.0 1283,433.9 1284,439.8 1285,429.4 1286,447.9 1287,433.9 1288,438.5 1289,425.9 1290,421.1 1291,442.4 1292,425.2 1293,428.7 1294,430.5 1295,424.6 1296,437.2 1297,402.0 1298,347.0 1299,398.0 1300,424.4 1301,430.9 1302,415.8 1303,433.5 1304,437.2 1305,429.8 1306,432.5 1307,423.4 1308,431.2 1309,435.7 1310,450.0 1311,443.6 1312,439.5 1313,445.5 1314,439.5 1315,436.2 1316,436.3 1317,434.1 1318,422.6 1319,445.2 1320,427.3 1321,435.8 1322,422.7 1323,421.7 1324,438.3 1325,430.8 1326,430.0 1327,423.6 1328,433.1 1329,411.3 1330,424.1 1331,428.3 1332,418.4 1333,429.9 1334,413.2 1335,432.1 1336,433.2 1337,422.0 1338,423.0 1339,435.2 1340,435.0 1341,413.7 1342,416.3 1343,421.7 1344,423.5 1345,408.9 1346,425.8 1347,435.3 1348,432.5 1349,424.2 1350,428.1 1351,417.9 1352,431.7 1353,422.7 1354,421.4 1355,427.2 1356,426.8 1357,429.2 1358,426.6 1359,420.7 1360,418.1 1361,409.2 1362,413.0 1363,433.2 1364,420.6 1365,414.7 1366,427.1 1367,423.3 1368,430.7 1369,430.7 1370,428.6 1371,431.7 1372,433.2 1373,428.7 1374,429.1 1375,423.0 1376,425.3 1377,419.0 1378,425.4 1379,430.2 1380,426.9 1381,410.9 1382,426.7 1383,439.3 1384,416.9 1385,422.5 1386,415.9 1387,426.6 1388,422.1 1389,427.1 1390,427.5 1391,429.9 1392,423.4 1393,421.5 1394,425.0 1395,419.0 1396,422.7 1397,427.5 1398,432.3 1399,425.8 1400,426.0 1401,424.3 1402,411.7 1403,406.7 1404,411.6 1405,414.6 1406,415.2 1407,436.3 1408,418.2 1409,419.4 1410,414.5 1411,427.8 1412,425.1 1413,412.3 1414,422.1 1415,416.2 1416,420.2 1417,428.4 1418,426.0 1419,425.7 1420,424.0 1421,426.9 1422,431.6 1423,423.4 1424,430.2 1425,415.2 1426,423.2 1427,414.6 1428,419.3 1429,430.4 1430,418.3 1431,415.1 1432,426.2 1433,409.3 1434,423.9 1435,420.6 1436,414.7 1437,419.4 1438,425.9 1439,414.6 1440,428.6 1441,430.1 1442,418.1 1443,433.5 1444,434.1 1445,429.2 1446,424.2 1447,443.3 1448,424.5 1449,416.8 1450,421.5 1451,435.6 1452,430.7 1453,414.7 1454,425.4 1455,418.7 1456,440.0 1457,428.4 1458,459.3 1459,433.6 1460,420.7 1461,429.2 1462,427.3 1463,426.3 1464,426.2 1465,428.8 1466,426.2 1467,419.2 1468,430.6 1469,430.7 1470,430.3 1471,431.3 1472,430.5 1473,427.6 1474,427.5 1475,426.7 1476,422.5 1477,427.7 1478,431.0 1479,415.7 1480,413.8 1481,432.3 1482,419.2 1483,425.1 1484,427.1 1485,417.5 1486,421.6 1487,406.8 1488,430.1 1489,419.5 1490,420.4 1491,412.5 1492,409.3 1493,446.6 1494,421.3 1495,420.6 1496,409.3 1497,433.8 1498,416.8 1499,421.2 1500,416.2 1501,426.3 1502,430.6 1503,424.1 1504,425.4 1505,421.2 1506,423.8 1507,413.6 1508,407.0 1509,409.8 1510,418.5 1511,411.4 1512,427.5 1513,412.6 1514,432.8 1515,421.6 1516,423.3 1517,415.4 1518,433.8 1519,416.6 1520,426.0 1521,411.3 1522,425.8 1523,440.9 1524,422.0 1525,435.9 1526,419.1 1527,429.8 1528,424.4 1529,416.2 1530,424.1 1531,421.1 1532,449.3 1533,413.0 1534,418.0 1535,418.4 1536,405.1 1537,408.2 1538,434.5 1539,429.7 1540,417.7 1541,430.7 1542,418.2 1543,412.2 1544,434.4 1545,423.4 1546,420.2 1547,417.9 1548,413.5 1549,416.5 1550,416.5 1551,415.1 1552,419.5 1553,424.1 1554,432.1 1555,404.2 1556,419.1 1557,416.0 1558,426.8 1559,427.5 1560,411.1 1561,424.8 1562,400.2 1563,394.9 1564,415.0 1565,440.6 1566,438.5 1567,413.4 1568,418.5 1569,406.1 1570,419.8 1571,414.6 1572,408.5 1573,422.2 1574,425.1 1575,429.8 1576,412.7 1577,419.4 1578,416.5 1579,434.8 1580,425.3 1581,417.0 1582,431.4 1583,409.5 1584,432.4 1585,428.6 1586,424.9 1587,420.6 1588,427.5 1589,423.1 1590,423.7 1591,407.7 1592,412.2 1593,425.0 1594,416.1 1595,417.5 1596,413.6 1597,404.5 1598,420.4 1599,419.9 1600,423.6 1601,414.5 1602,421.7 1603,430.3 1604,414.0 1605,425.4 1606,421.0 1607,427.7 1608,421.2 1609,416.3 1610,413.7 1611,427.1 1612,419.6 1613,392.4 1614,416.7 1615,421.4 1616,430.1 1617,419.3 1618,416.4 1619,427.6 1620,436.9 1621,413.6 1622,426.1 1623,427.6 1624,439.6 1625,429.9 1626,420.5 1627,434.1 1628,416.9 1629,421.3 1630,431.1 1631,416.4 1632,423.4 1633,415.6 1634,419.3 1635,426.5 1636,428.8 1637,433.6 1638,425.1 1639,417.1 1640,428.8 1641,416.0 1642,425.4 1643,421.5 1644,437.0 1645,420.5 1646,423.0 1647,431.7 1648,433.4 1649,411.7 1650,446.3 1651,417.4 1652,430.7 1653,429.4 1654,442.4 1655,413.6 1656,411.8 1657,418.6 1658,414.2 1659,432.7 1660,429.5 1661,439.9 1662,426.5 1663,434.5 1664,432.0 1665,425.5 1666,423.6 1667,430.3 1668,433.0 1669,422.7 1670,442.9 1671,414.3 1672,421.5 1673,451.7 1674,415.6 1675,427.9 1676,439.5 1677,421.5 1678,428.8 1679,431.3 1680,422.8 1681,430.7 1682,416.5 1683,437.7 1684,422.1 1685,426.1 1686,431.9 1687,417.8 1688,426.3 1689,451.0 1690,412.4 1691,427.6 1692,429.6 1693,434.9 1694,421.4 1695,414.9 1696,418.0 1697,425.8 1698,421.4 1699,426.1 1700,426.4 1701,424.9 1702,434.4 1703,435.6 1704,422.0 1705,423.1 1706,433.2 1707,434.7 1708,436.8 1709,429.8 1710,427.9 1711,433.8 1712,428.5 1713,423.0 1714,426.1 1715,429.6 1716,449.5 1717,432.7 1718,441.2 1719,424.4 1720,424.2 1721,434.2 1722,430.1 1723,428.8 1724,441.9 1725,424.0 1726,438.2 1727,431.2 1728,424.7 1729,420.5 1730,425.0 1731,419.3 1732,435.3 1733,429.3 1734,418.3 1735,427.8 1736,423.8 1737,441.0 1738,427.9 1739,430.8 1740,436.2 1741,424.0 1742,443.1 1743,424.2 1744,426.6 1745,437.0 1746,428.9 1747,444.8 1748,433.7 1749,431.2 1750,430.2 1751,422.5 1752,424.7 1753,416.2 1754,416.9 1755,442.7 1756,417.6 1757,420.2 1758,431.2 1759,432.7 1760,423.8 1761,434.6 1762,416.8 1763,435.7 1764,423.4 1765,431.5 1766,434.6 1767,445.0 1768,425.1 1769,423.2 1770,429.3 1771,434.2 1772,437.6 1773,424.3 1774,428.5 1775,431.0 1776,414.1 1777,428.9 1778,420.3 1779,434.7 1780,412.0 1781,430.5 1782,421.6 1783,438.8 1784,435.9 1785,418.4 1786,439.8 1787,434.4 1788,426.5 1789,430.6 1790,454.3 1791,437.8 1792,434.4 1793,440.7 1794,431.1 1795,443.6 1796,427.2 1797,426.0 1798,464.4 1799,421.2 1800,426.3 1801,427.9 1802,432.1 1803,431.7 1804,445.5 1805,422.8 1806,419.2 1807,449.6 1808,423.2 1809,426.6 1810,436.6 1811,421.5 1812,426.6 1813,431.6 1814,426.0 1815,412.7 1816,433.7 1817,426.8 1818,418.8 1819,428.8 1820,426.1 1821,444.1 1822,425.5 1823,430.3 1824,425.6 1825,435.8 1826,414.8 1827,422.6 1828,433.5 1829,433.9 1830,427.0 1831,436.3 1832,417.7 1833,442.2 1834,434.7 1835,419.1 1836,423.0 1837,441.9 1838,420.1 1839,430.6 1840,443.8 1841,445.5 1842,427.3 1843,439.7 1844,433.8 1845,434.9 1846,426.8 1847,422.2 1848,441.4 1849,425.7 1850,427.0 1851,412.2 1852,439.5 1853,433.2 1854,431.0 1855,430.9 1856,439.8 1857,421.9 1858,426.4 1859,431.2 1860,440.4 1861,447.1 1862,433.1 1863,435.4 1864,443.0 1865,443.3 1866,440.3 1867,432.6 1868,444.3 1869,433.0 1870,429.5 1871,453.5 1872,416.2 1873,443.5 1874,432.2 1875,429.8 1876,424.9 1877,435.1 1878,432.0 1879,430.7 1880,438.8 1881,427.3 1882,436.9 1883,428.8 1884,443.9 1885,422.1 1886,420.8 1887,462.9 1888,437.2 1889,440.2 1890,432.7 1891,473.1 1892,421.6 1893,448.7 1894,440.6 1895,438.2 1896,430.8 1897,442.8 1898,434.7 1899,436.9 1900,442.8 1901,449.1 1902,419.6 1903,455.8 1904,426.5 1905,430.9 1906,438.5 1907,431.5 1908,419.5 1909,421.0 1910,441.1 1911,458.1 1912,428.9 1913,429.9 1914,448.2 1915,434.5 1916,437.2 1917,428.4 1918,456.2 1919,437.3 1920,429.4 1921,427.5 1922,442.2 1923,440.7 1924,436.7 1925,441.5 1926,430.0 1927,447.2 1928,436.6 1929,433.3 1930,432.7 1931,439.0 1932,435.0 1933,431.3 1934,432.0 1935,431.1 1936,448.1 1937,434.2 1938,451.3 1939,443.2 1940,425.6 1941,445.5 1942,431.2 1943,434.3 1944,436.2 1945,435.0 1946,429.2 1947,428.4 1948,429.8 1949,430.2 1950,441.3 1951,438.2 1952,419.9 1953,451.9 1954,441.9 1955,426.8 1956,437.9 1957,430.3 1958,442.3 1959,442.2 1960,448.7 1961,437.8 1962,440.3 1963,436.0 1964,424.0 1965,437.9 1966,433.4 1967,432.4 1968,436.7 1969,453.1 1970,440.7 1971,437.8 1972,435.4 1973,435.4 1974,446.6 1975,432.5 1976,443.9 1977,444.9 1978,434.2 1979,434.6 1980,447.9 1981,438.7 1982,431.0 1983,430.8 1984,433.9 1985,435.6 1986,457.0 1987,443.1 1988,461.8 1989,440.8 1990,423.4 1991,418.8 1992,437.2 1993,430.3 1994,433.3 1995,443.3 1996,427.8 1997,441.3 1998,426.7 1999,436.2 2000,442.7 2001,451.2 2002,439.5 2003,438.9 2004,421.1 2005,436.5 2006,430.0 2007,440.9 2008,440.3 2009,453.3 2010,438.5 2011,424.3 2012,439.1 2013,421.9 2014,442.7 2015,427.1 2016,450.0 2017,437.5 2018,438.0 2019,436.6 2020,436.8 2021,431.9 2022,446.2 2023,435.5 2024,441.7 2025,440.4 2026,440.4 2027,435.4 2028,435.6 2029,449.8 2030,437.8 2031,456.2 2032,434.7 2033,444.6 2034,430.4 2035,435.4 2036,427.1 2037,434.1 2038,442.9 2039,424.1 2040,439.0 2041,431.4 2042,445.4 2043,443.5 2044,440.2 2045,445.1 2046,441.9 2047,436.9 2048,428.1 2049,449.0 2050,434.5 2051,448.5 2052,445.5 2053,449.6 2054,423.5 2055,439.0 2056,440.0 2057,433.6 2058,456.2 2059,443.5 2060,446.1 2061,435.3 2062,440.4 2063,425.5 2064,434.7 2065,432.9 2066,454.5 2067,440.9 2068,452.2 2069,427.6 2070,447.2 2071,425.9 2072,442.6 2073,431.7 2074,442.2 2075,458.0 2076,436.4 2077,440.9 2078,451.9 2079,428.4 2080,461.9 2081,435.3 2082,461.9 2083,450.5 2084,452.0 2085,456.4 2086,459.3 2087,444.3 2088,446.9 2089,457.0 2090,448.6 2091,449.7 2092,443.1 2093,443.6 2094,459.1 2095,446.6 2096,448.0 2097,453.8 2098,446.4 2099,456.0 2100,452.7 2101,438.5 2102,436.6 2103,428.4 2104,437.5 2105,440.5 2106,446.4 2107,447.9 2108,445.1 2109,442.6 2110,448.2 2111,463.4 2112,454.5 2113,438.2 2114,448.7 2115,443.0 2116,424.6 2117,462.2 2118,451.6 2119,448.7 2120,448.3 2121,444.8 2122,445.9 2123,451.6 2124,466.6 2125,453.1 2126,437.1 2127,453.2 2128,440.9 2129,455.6 2130,441.8 2131,446.9 2132,462.8 2133,439.1 2134,451.5 2135,444.9 2136,452.1 2137,471.4 2138,448.1 2139,469.7 2140,463.1 2141,444.0 2142,450.0 2143,441.2 2144,450.6 2145,452.6 2146,452.7 2147,446.3 2148,441.4 2149,460.3 2150,454.4 2151,442.9 2152,446.1 2153,446.7 2154,456.2 2155,439.3 2156,442.3 2157,452.4 2158,456.4 2159,446.3 2160,440.5 2161,447.6 2162,445.3 2163,454.1 2164,455.6 2165,439.7 2166,445.8 2167,452.1 2168,446.9 2169,472.0 2170,450.1 2171,446.5 2172,468.3 2173,452.9 2174,452.7 2175,446.5 2176,439.6 2177,455.7 2178,445.1 2179,444.3 2180,451.4 2181,441.9 2182,457.1 2183,444.3 2184,447.2 2185,454.1 2186,459.7 2187,465.1 2188,441.5 2189,447.4 2190,449.0 2191,438.0 2192,443.2 2193,455.1 2194,448.3 2195,454.6 2196,444.8 2197,452.5 2198,452.0 2199,451.6 2200,457.2 2201,460.4 2202,433.5 2203,447.7 2204,443.5 2205,453.9 2206,462.2 2207,449.5 2208,439.9 2209,474.2 2210,446.4 2211,450.9 2212,443.2 2213,449.3 2214,452.7 2215,455.2 2216,446.9 2217,466.7 2218,446.8 2219,458.0 2220,456.6 2221,446.7 2222,452.7 2223,455.6 2224,460.6 2225,444.7 2226,451.1 2226,867" fill="#323232"/>
<rect x="1087" y="181" width="48" height="686" fill="#fff" fill-opacity="0.155"/>
<path d="M210.5 181V867M270.5 181V867M330.5 181V867M390.5 181V867M450.5 181V867M510.5 181V867M570.5 181V867M631.5 181V867M691.5 181V867M751.5 181V867M811.5 181V867M871.5 181V867M931.5 181V867M991.5 181V867M1051.5 181V867M1111.5 181V867M1171.5 181V867M1231.5 181V867M1291.5 181V867M1351.5 181V867M1411.5 181V867M1471.5 181V867M1531.5 181V867M1591.5 181V867M1652.5 181V867M1712.5 181V867M1772.5 181V867M1832.5 181V867M1892.5 181V867M1952.5 181V867M2012.5 181V867M2072.5 181V867M2132.5 181V867M2192.5 181V867" stroke="#fff" stroke-opacity="0.062" stroke-width="1" fill="none"/>
<path d="M0 180.5H2226M0 213.5H2226M0 246.5H2226M0 278.5H2226M0 311.5H2226M0 344.5H2226M0 376.5H2226M0 409.5H2226M0 442.5H2226M0 474.5H2226M0 507.5H2226M0 540.5H2226M0 572.5H2226M0 605.5H2226M0 637.5H2226M0 670.5H2226M0 703.5H2226M0 735.5H2226M0 768.5H2226M0 801.5H2226M0 833.5H2226" stroke="#fff" stroke-opacity="0.16" stroke-width="1" fill="none"/>
<path d="M0.5 451V453M1.5 451V454M2.5 450V452M3.5 449V451M4.5 444V450M5.5 441V445M6.5 443V448M7.5 447V449M8.5 441V448M9.5 437V447M10.5 446V455M11.5 453V455M12.5 452V456M13.5 446V453M14.5 444V450M15.5 449V457M16.5 455V459M17.5 453V456M18.5 453V455M19.5 454V459M20.5 448V462M21.5 436V449M22.5 440V447M23.5 446V454M24.5 450V459M25.5 441V451M26.5 448V459M27.5 439V449M28.5 443V448M29.5 445V447M30.5 440V448M31.5 433V442M32.5 441V450M33.5 441V448M34.5 447V454M35.5 450V455M36.5 442V451M37.5 440V453M38.5 452V466M39.5 445V456M40.5 449V453M41.5 449V453M42.5 445V456M43.5 435V446M44.5 439V444M45.5 443V456M46.5 455V468M47.5 454V466M48.5 444V455M49.5 446V449M50.5 448V449M51.5 446V449M52.5 441V447M53.5 439V445M54.5 443V451M55.5 436V444M56.5 437V449M57.5 446V458M58.5 436V447M59.5 446V457M60.5 444V457M61.5 432V445M62.5 441V452M63.5 441V447M64.5 441V446M65.5 445V450M66.5 441V446M67.5 445V452M68.5 446V455M69.5 436V447M70.5 434V441M71.5 440V446M72.5 444V457M73.5 454V469M74.5 439V455M75.5 447V459M76.5 458V463M77.5 451V462M78.5 442V452M79.5 451V461M80.5 449V458M81.5 445V450M82.5 445V450M83.5 449V454M84.5 448V453M85.5 445V449M86.5 444V451M87.5 450V457M88.5 447V454M89.5 444V448M90.5 443V450M91.5 438V447M92.5 446V455M93.5 442V450M94.5 438V450M95.5 446V462M96.5 432V447M97.5 443V454M98.5 451V458M99.5 457V464M100.5 452V459M101.5 456V462M102.5 454V462M103.5 442V455M104.5 436V449M105.5 448V461M106.5 441V454M107.5 433V442M108.5 430V437M109.5 436V449M110.5 448V456M111.5 446V457M112.5 435V447M113.5 434V438M114.5 431V435M115.5 434V442M116.5 441V447M117.5 439V444M118.5 438V444M119.5 443V448M120.5 439V444M121.5 438V440M122.5 438V446M123.5 445V454M124.5 438V446M125.5 440V444M126.5 441V444M127.5 439V442M128.5 440V449M129.5 448V458M130.5 453V459M131.5 439V454M132.5 431V440M133.5 432V437M134.5 436V444M135.5 443V449M136.5 445V448M137.5 445V453M138.5 452V460M139.5 450V457M140.5 448V453M141.5 448V457M142.5 440V449M143.5 443V449M144.5 439V444M145.5 442V447M146.5 438V443M147.5 436V446M148.5 427V437M149.5 428V437M150.5 436V449M151.5 448V454M152.5 449V454M153.5 444V450M154.5 444V448M155.5 439V445M156.5 437V444M157.5 441V449M158.5 433V442M159.5 432V434M160.5 433V437M161.5 434V440M162.5 430V435M163.5 434V446M164.5 445V453M165.5 439V447M166.5 441V448M167.5 447V453M168.5 441V453M169.5 430V442M170.5 438V446M171.5 433V442M172.5 429V443M173.5 442V457M174.5 430V444M175.5 431V436M176.5 434V438M177.5 429V435M178.5 427V442M179.5 441V455M180.5 439V449M181.5 434V440M182.5 432V437M183.5 436V442M184.5 433V443M185.5 424V434M186.5 425V430M187.5 429V442M188.5 438V452M189.5 424V439M190.5 432V442M191.5 431V438M192.5 430V440M193.5 439V449M194.5 434V442M195.5 433V438M196.5 437V443M197.5 442V447M198.5 443V449M199.5 438V444M200.5 441V447M201.5 442V449M202.5 436V443M203.5 438V445M204.5 444V451M205.5 441V448M206.5 433V442M207.5 428V435M208.5 434V445M209.5 444V450M210.5 442V446M211.5 445V449M212.5 443V448M213.5 436V444M214.5 433V437M215.5 433V441M216.5 438V447M217.5 430V439M218.5 430V440M219.5 439V448M220.5 444V448M221.5 442V445M222.5 442V444M223.5 440V444M224.5 433V441M225.5 429V436M226.5 435V442M227.5 429V439M228.5 437V447M229.5 429V438M230.5 435V444M231.5 428V440M232.5 439V450M233.5 434V443M234.5 437V446M235.5 441V451M236.5 432V442M237.5 436V442M238.5 439V441M239.5 433V442M240.5 426V434M241.5 428V432M242.5 431V436M243.5 432V440M244.5 425V435M245.5 434V444M246.5 437V446M247.5 444V454M248.5 435V445M249.5 434V442M250.5 441V450M251.5 439V448M252.5 432V440M253.5 432V438M254.5 433V443M255.5 424V434M256.5 423V439M257.5 438V456M258.5 449V459M259.5 440V450M260.5 436V442M261.5 432V437M262.5 432V437M263.5 436V445M264.5 444V449M265.5 442V457M266.5 454V472M267.5 436V455M268.5 436V440M269.5 434V437M270.5 430V435M271.5 426V437M272.5 435V447M273.5 424V436M274.5 432V441M275.5 434V438M276.5 430V437M277.5 423V431M278.5 429V438M279.5 422V433M280.5 432V442M281.5 432V437M282.5 433V438M283.5 437V444M284.5 443V448M285.5 440V446M286.5 437V444M287.5 443V450M288.5 440V449M289.5 433V441M290.5 431V434M291.5 426V432M292.5 423V436M293.5 435V448M294.5 436V444M295.5 432V441M296.5 439V448M297.5 430V440M298.5 432V437M299.5 436V441M300.5 436V443M301.5 431V437M302.5 436V442M303.5 425V438M304.5 417V426M305.5 425V434M306.5 424V432M307.5 431V438M308.5 434V439M309.5 434V442M310.5 427V435M311.5 428V432M312.5 430V433M313.5 427V435M314.5 434V444M315.5 438V446M316.5 431V439M317.5 433V437M318.5 430V435M319.5 434V438M320.5 431V436M321.5 435V440M322.5 428V436M323.5 425V442M324.5 441V457M325.5 433V446M326.5 427V435M327.5 419V428M328.5 422V427M329.5 426V428M330.5 427V429M331.5 427V441M332.5 440V453M333.5 435V449M334.5 426V437M335.5 436V446M336.5 432V440M337.5 424V433M338.5 418V427M339.5 426V435M340.5 432V435M341.5 425V433M342.5 420V435M343.5 434V449M344.5 432V441M345.5 439V446M346.5 429V441M347.5 422V434M348.5 433V444M349.5 434V440M350.5 433V435M351.5 433V437M352.5 436V440M353.5 431V437M354.5 428V434M355.5 427V440M356.5 416V433M357.5 432V449M358.5 430V441M359.5 428V431M360.5 423V429M361.5 417V424M362.5 422V428M363.5 424V428M364.5 426V432M365.5 420V428M366.5 427V435M367.5 419V431M368.5 411V423M369.5 422V436M370.5 435V437M371.5 434V436M372.5 435V440M373.5 436V442M374.5 423V437M375.5 415V424M376.5 420V435M377.5 434V444M378.5 426V437M379.5 423V427M380.5 425V433M381.5 429V438M382.5 421V430M383.5 421V427M384.5 426V434M385.5 433V436M386.5 429V435M387.5 425V431M388.5 430V435M389.5 430V434M390.5 426V431M391.5 425V434M392.5 433V443M393.5 424V435M394.5 420V425M395.5 423V427M396.5 426V437M397.5 429V444M398.5 415V430M399.5 421V429M400.5 428V430M401.5 425V429M402.5 424V427M403.5 426V431M404.5 427V432M405.5 424V434M406.5 432V443M407.5 423V433M408.5 424V432M409.5 418V430M410.5 429V442M411.5 423V433M412.5 424V432M413.5 431V438M414.5 429V440M415.5 439V450M416.5 431V446M417.5 419V432M418.5 416V429M419.5 428V440M420.5 419V432M421.5 414V424M422.5 423V433M423.5 421V429M424.5 428V441M425.5 440V445M426.5 438V445M427.5 433V439M428.5 432V440M429.5 426V433M430.5 426V432M431.5 427V436M432.5 419V428M433.5 422V427M434.5 422V432M435.5 431V441M436.5 424V433M437.5 422V425M438.5 421V431M439.5 426V440M440.5 412V427M441.5 419V428M442.5 425V428M443.5 420V426M444.5 417V421M445.5 417V421M446.5 420V425M447.5 424V429M448.5 424V432M449.5 416V425M450.5 418V430M451.5 408V419M452.5 408V418M453.5 400V415M454.5 414V430M455.5 427V429M456.5 423V428M457.5 420V430M458.5 429V438M459.5 431V435M460.5 430V438M461.5 421V431M462.5 419V422M463.5 419V424M464.5 423V428M465.5 427V429M466.5 428V435M467.5 434V444M468.5 437V447M469.5 427V438M470.5 424V429M471.5 418V425M472.5 416V420M473.5 417V424M474.5 412V418M475.5 416V421M476.5 419V429M477.5 428V437M478.5 423V436M479.5 413V424M480.5 418V428M481.5 427V442M482.5 437V451M483.5 420V438M484.5 415V421M485.5 416V421M486.5 420V430M487.5 429V435M488.5 420V433M489.5 411V422M490.5 421V432M491.5 418V426M492.5 423V434M493.5 431V439M494.5 421V432M495.5 418V426M496.5 425V434M497.5 425V430M498.5 423V429M499.5 418V425M500.5 424V432M501.5 421V429M502.5 415V422M503.5 413V416M504.5 414V419M505.5 418V427M506.5 426V432M507.5 421V429M508.5 416V425M509.5 424V434M510.5 419V427M511.5 425V433M512.5 422V428M513.5 417V424M514.5 411V421M515.5 420V430M516.5 420V427M517.5 421V432M518.5 412V422M519.5 418V426M520.5 413V422M521.5 421V430M522.5 428V429M523.5 428V432M524.5 423V435M525.5 413V425M526.5 424V437M527.5 419V429M528.5 417V420M529.5 419V432M530.5 431V441M531.5 429V436M532.5 435V442M533.5 422V440M534.5 407V423M535.5 411V424M536.5 423V431M537.5 419V427M538.5 414V420M539.5 418V426M540.5 420V431M541.5 409V421M542.5 411V429M543.5 428V446M544.5 437V449M545.5 425V438M546.5 421V426M547.5 417V427M548.5 426V435M549.5 425V432M550.5 422V426M551.5 421V431M552.5 430V441M553.5 426V434M554.5 419V429M555.5 410V420M556.5 412V416M557.5 411V418M558.5 417V425M559.5 420V426M560.5 415V421M561.5 420V428M562.5 427V429M563.5 427V429M564.5 426V429M565.5 425V430M566.5 429V438M567.5 431V441M568.5 417V432M569.5 413V423M570.5 422V431M571.5 419V428M572.5 411V420M573.5 407V412M574.5 406V408M575.5 407V419M576.5 418V428M577.5 414V424M578.5 408V416M579.5 415V424M580.5 409V417M581.5 414V426M582.5 424V433M583.5 417V425M584.5 418V421M585.5 413V419M586.5 411V417M587.5 416V421M588.5 418V425M589.5 424V436M590.5 426V442M591.5 412V427M592.5 416V421M593.5 412V420M594.5 419V426M595.5 417V422M596.5 420V429M597.5 428V435M598.5 428V432M599.5 423V429M600.5 418V424M601.5 418V430M602.5 429V441M603.5 427V435M604.5 430V434M605.5 423V433M606.5 414V424M607.5 419V427M608.5 412V420M609.5 415V425M610.5 424V432M611.5 413V428M612.5 402V414M613.5 409V423M614.5 417V429M615.5 407V418M616.5 417V429M617.5 415V423M618.5 414V418M619.5 417V422M620.5 417V420M621.5 418V421M622.5 420V424M623.5 420V423M624.5 416V421M625.5 414V418M626.5 417V421M627.5 414V421M628.5 408V415M629.5 411V424M630.5 418V433M631.5 405V429M632.5 428V452M633.5 425V439M634.5 426V434M635.5 417V427M636.5 416V430M637.5 429V444M638.5 423V434M639.5 418V428M640.5 408V419M641.5 409V412M642.5 411V413M643.5 412V419M644.5 418V428M645.5 426V430M646.5 419V427M647.5 416V424M648.5 423V430M649.5 418V425M650.5 421V427M651.5 426V430M652.5 426V430M653.5 423V427M654.5 421V427M655.5 425V433M656.5 418V426M657.5 419V421M658.5 414V420M659.5 410V418M660.5 417V427M661.5 421V429M662.5 413V422M663.5 412V414M664.5 411V417M665.5 416V422M666.5 420V422M667.5 413V421M668.5 407V414M669.5 405V416M670.5 415V427M671.5 405V417M672.5 412V421M673.5 404V413M674.5 406V418M675.5 417V426M676.5 413V420M677.5 415V420M678.5 419V425M679.5 422V427M680.5 418V423M681.5 417V421M682.5 419V424M683.5 415V420M684.5 416V418M685.5 416V421M686.5 420V425M687.5 422V426M688.5 417V423M689.5 416V418M690.5 416V421M691.5 420V426M692.5 424V432M693.5 425V439M694.5 412V426M695.5 417V422M696.5 415V421M697.5 410V421M698.5 420V430M699.5 420V425M700.5 420V422M701.5 418V423M702.5 415V422M703.5 421V432M704.5 423V434M705.5 412V424M706.5 422V432M707.5 422V431M708.5 408V423M709.5 400V411M710.5 410V424M711.5 418V428M712.5 410V419M713.5 413V417M714.5 416V420M715.5 419V429M716.5 426V435M717.5 418V427M718.5 420V426M719.5 425V428M720.5 420V428M721.5 415V423M722.5 422V432M723.5 426V433M724.5 416V427M725.5 413V417M726.5 414V424M727.5 422V430M728.5 415V423M729.5 418V421M730.5 416V422M731.5 419V426M732.5 413V420M733.5 419V426M734.5 414V420M735.5 416V423M736.5 422V428M737.5 414V425M738.5 407V423M739.5 422V438M740.5 418V429M741.5 422V427M742.5 419V424M743.5 421V429M744.5 423V434M745.5 412V424M746.5 418V425M747.5 424V426M748.5 424V427M749.5 424V430M750.5 411V425M751.5 405V414M752.5 413V422M753.5 420V422M754.5 418V422M755.5 414V421M756.5 420V427M757.5 420V425M758.5 418V421M759.5 419V423M760.5 422V434M761.5 428V443M762.5 414V429M763.5 416V420M764.5 414V417M765.5 415V425M766.5 424V432M767.5 419V431M768.5 429V441M769.5 418V430M770.5 421V428M771.5 423V431M772.5 417V424M773.5 419V432M774.5 431V440M775.5 426V438M776.5 418V427M777.5 422V427M778.5 422V426M779.5 412V423M780.5 404V413M781.5 411V420M782.5 414V422M783.5 421V429M784.5 421V427M785.5 412V422M786.5 407V420M787.5 419V431M788.5 417V426M789.5 414V427M790.5 422V440M791.5 405V423M792.5 414V424M793.5 420V423M794.5 418V426M795.5 422V433M796.5 412V423M797.5 418V429M798.5 408V419M799.5 413V418M800.5 414V416M801.5 415V423M802.5 422V427M803.5 417V423M804.5 416V419M805.5 414V423M806.5 422V431M807.5 423V427M808.5 416V429M809.5 404V417M810.5 413V423M811.5 404V414M812.5 409V418M813.5 417V421M814.5 415V425M815.5 421V434M816.5 409V422M817.5 418V428M818.5 422V427M819.5 413V423M820.5 407V421M821.5 420V434M822.5 427V435M823.5 418V428M824.5 416V422M825.5 421V429M826.5 424V433M827.5 416V425M828.5 414V417M829.5 413V418M830.5 416V423M831.5 411V423M832.5 422V434M833.5 426V434M834.5 416V427M835.5 413V417M836.5 414V418M837.5 417V424M838.5 423V427M839.5 422V425M840.5 423V428M841.5 427V432M842.5 431V432M843.5 417V432M844.5 404V418M845.5 406V413M846.5 400V411M847.5 410V424M848.5 423V427M849.5 421V425M850.5 417V422M851.5 413V427M852.5 426V439M853.5 417V431M854.5 412V418M855.5 415V429M856.5 428V441M857.5 419V431M858.5 415V420M859.5 413V416M860.5 412V423M861.5 422V433M862.5 424V429M863.5 424V425M864.5 424V430M865.5 427V435M866.5 421V431M867.5 425V440M868.5 411V426M869.5 419V428M870.5 417V425M871.5 412V418M872.5 416V427M873.5 426V433M874.5 430V432M875.5 425V431M876.5 420V426M877.5 424V431M878.5 426V433M879.5 420V427M880.5 421V424M881.5 423V429M882.5 428V432M883.5 428V431M884.5 425V429M885.5 424V427M886.5 422V429M887.5 416V423M888.5 421V429M889.5 414V422M890.5 421V428M891.5 421V426M892.5 425V433M893.5 432V435M894.5 431V434M895.5 433V436M896.5 432V435M897.5 429V433M898.5 421V430M899.5 416V428M900.5 427V440M901.5 422V433M902.5 420V423M903.5 422V428M904.5 423V429M905.5 418V426M906.5 425V437M907.5 435V441M908.5 427V436M909.5 423V431M910.5 430V437M911.5 426V435M912.5 434V443M913.5 428V437M914.5 427V442M915.5 441V456M916.5 428V443M917.5 434V441M918.5 428V435M919.5 430V436M920.5 425V431M921.5 425V429M922.5 428V433M923.5 417V435M924.5 372V418M925.5 345V373M926.5 372V417M927.5 416V433M928.5 432V433M929.5 430V433M930.5 428V438M931.5 435V446M932.5 424V436M933.5 429V435M934.5 426V431M935.5 430V441M936.5 440V447M937.5 439V446M938.5 433V440M939.5 438V444M940.5 441V445M941.5 440V448M942.5 434V441M943.5 434V442M944.5 441V449M945.5 435V444M946.5 443V453M947.5 438V446M948.5 442V451M949.5 450V457M950.5 445V453M951.5 441V446M952.5 439V443M953.5 442V452M954.5 448V459M955.5 439V450M956.5 449V461M957.5 452V457M958.5 447V459M959.5 437V448M960.5 444V464M961.5 463V476M962.5 448V464M963.5 445V452M964.5 451V458M965.5 441V455M966.5 430V442M967.5 433V441M968.5 440V445M969.5 444V449M970.5 448V454M971.5 452V456M972.5 448V453M973.5 451V455M974.5 450V454M975.5 444V451M976.5 442V446M977.5 445V455M978.5 454V461M979.5 448V456M980.5 446V459M981.5 458V470M982.5 451V461M983.5 451V458M984.5 457V464M985.5 454V459M986.5 455V457M987.5 454V459M988.5 450V455M989.5 451V455M990.5 454V457M991.5 450V455M992.5 449V459M993.5 458V469M994.5 460V470M995.5 452V461M996.5 460V469M997.5 464V469M998.5 465V473M999.5 447V466M1000.5 435V453M1001.5 452V470M1002.5 446V460M1003.5 459V473M1004.5 456V471M1005.5 470V485M1006.5 459V474M1007.5 455V462M1008.5 460V468M1009.5 453V461M1010.5 458V469M1011.5 457V475M1012.5 441V461M1013.5 460V480M1014.5 459V470M1015.5 467V476M1016.5 465V471M1017.5 468V472M1018.5 463V471M1019.5 458V471M1020.5 470V482M1021.5 468V477M1022.5 465V469M1023.5 466V471M1024.5 470V479M1025.5 478V485M1026.5 477V486M1027.5 464V478M1028.5 459V468M1029.5 467V480M1030.5 475V484M1031.5 466V476M1032.5 466V470M1033.5 469V476M1034.5 472V479M1035.5 465V473M1036.5 469V474M1037.5 472V478M1038.5 475V482M1039.5 470V477M1040.5 476V483M1041.5 471V477M1042.5 471V474M1043.5 470V473M1044.5 472V478M1045.5 477V481M1046.5 478V481M1047.5 474V479M1048.5 473V480M1049.5 479V486M1050.5 476V481M1051.5 478V482M1052.5 479V481M1053.5 480V491M1054.5 490V500M1055.5 487V495M1056.5 483V488M1057.5 481V486M1058.5 485V492M1059.5 491V493M1060.5 486V494M1061.5 480V487M1062.5 481V484M1063.5 482V489M1064.5 486V496M1065.5 478V487M1066.5 483V499M1067.5 498V508M1068.5 494V504M1069.5 490V495M1070.5 491V493M1071.5 492V497M1072.5 489V501M1073.5 479V490M1074.5 486V493M1075.5 486V495M1076.5 494V507M1077.5 496V511M1078.5 483V497M1079.5 488V495M1080.5 482V497M1081.5 496V511M1082.5 507V511M1083.5 501V514M1084.5 489V502M1085.5 492V495M1086.5 489V495M1087.5 481V500M1088.5 462V482M1089.5 474V495M1090.5 494V503M1091.5 493V499M1092.5 493V504M1093.5 503V514M1094.5 502V511M1095.5 496V503M1096.5 497V502M1097.5 501V506M1098.5 503V508M1099.5 499V504M1100.5 502V506M1101.5 500V503M1102.5 502V506M1103.5 501V504M1104.5 501V518M1105.5 517V534M1106.5 506V523M1107.5 502V507M1108.5 504V507M1109.5 501V505M1110.5 500V511M1111.5 510V522M1112.5 504V522M1113.5 486V505M1114.5 498V512M1115.5 503V508M1116.5 507V513M1117.5 504V514M1118.5 494V505M1119.5 493V499M1120.5 498V507M1121.5 506V510M1122.5 507V509M1123.5 506V517M1124.5 515V527M1125.5 504V516M1126.5 502V505M1127.5 500V505M1128.5 503V509M1129.5 497V504M1130.5 495V508M1131.5 507V521M1132.5 501V512M1133.5 501V505M1134.5 498V504M1135.5 484V510M1136.5 458V485M1137.5 474V497M1138.5 496V503M1139.5 502V507M1140.5 501V511M1141.5 491V502M1142.5 491V496M1143.5 493V500M1144.5 486V494M1145.5 493V502M1146.5 496V499M1147.5 494V502M1148.5 486V495M1149.5 491V496M1150.5 488V494M1151.5 481V489M1152.5 477V484M1153.5 483V494M1154.5 491V499M1155.5 480V492M1156.5 476V485M1157.5 482V494M1158.5 471V483M1159.5 474V479M1160.5 478V483M1161.5 480V486M1162.5 475V481M1163.5 478V487M1164.5 486V494M1165.5 479V487M1166.5 481V487M1167.5 477V482M1168.5 480V486M1169.5 484V487M1170.5 478V485M1171.5 472V479M1172.5 469V481M1173.5 480V492M1174.5 470V482M1175.5 470V476M1176.5 475V486M1177.5 485V493M1178.5 492V495M1179.5 484V494M1180.5 472V485M1181.5 468V473M1182.5 469V473M1183.5 471V473M1184.5 470V477M1185.5 475V484M1186.5 467V476M1187.5 463V469M1188.5 458V469M1189.5 468V479M1190.5 465V473M1191.5 465V466M1192.5 465V468M1193.5 467V470M1194.5 468V472M1195.5 471V475M1196.5 458V473M1197.5 445V459M1198.5 453V461M1199.5 458V462M1200.5 455V459M1201.5 458V462M1202.5 457V466M1203.5 465V475M1204.5 468V472M1205.5 458V469M1206.5 450V459M1207.5 457V465M1208.5 453V461M1209.5 460V467M1210.5 458V464M1211.5 455V459M1212.5 456V461M1213.5 460V476M1214.5 475V487M1215.5 465V478M1216.5 453V466M1217.5 444V454M1218.5 453V463M1219.5 448V456M1220.5 448V456M1221.5 455V462M1222.5 448V457M1223.5 445V464M1224.5 463V482M1225.5 463V474M1226.5 461V464M1227.5 457V463M1228.5 452V458M1229.5 454V458M1230.5 451V457M1231.5 446V452M1232.5 450V457M1233.5 455V459M1234.5 451V456M1235.5 449V458M1236.5 452V466M1237.5 439V453M1238.5 446V455M1239.5 449V454M1240.5 444V450M1241.5 443V446M1242.5 445V449M1243.5 443V449M1244.5 448V455M1245.5 449V457M1246.5 442V450M1247.5 442V445M1248.5 439V450M1249.5 449V459M1250.5 440V452M1251.5 435V443M1252.5 442V451M1253.5 445V449M1254.5 448V452M1255.5 449V452M1256.5 443V450M1257.5 439V450M1258.5 449V460M1259.5 449V457M1260.5 445V450M1261.5 442V448M1262.5 437V443M1263.5 440V454M1264.5 453V464M1265.5 450V462M1266.5 438V451M1267.5 436V442M1268.5 441V446M1269.5 437V445M1270.5 431V445M1271.5 444V459M1272.5 442V451M1273.5 437V443M1274.5 434V439M1275.5 438V444M1276.5 436V445M1277.5 429V440M1278.5 439V452M1279.5 449V454M1280.5 435V450M1281.5 426V436M1282.5 432V438M1283.5 434V438M1284.5 435V441M1285.5 429V440M1286.5 439V449M1287.5 434V442M1288.5 432V440M1289.5 423V433M1290.5 421V433M1291.5 432V443M1292.5 425V435M1293.5 427V431M1294.5 428V432M1295.5 425V432M1296.5 420V438M1297.5 374V421M1298.5 347V375M1299.5 372V412M1300.5 411V429M1301.5 423V432M1302.5 416V426M1303.5 425V436M1304.5 434V438M1305.5 430V435M1306.5 428V433M1307.5 423V429M1308.5 427V434M1309.5 433V444M1310.5 443V451M1311.5 442V448M1312.5 439V443M1313.5 442V446M1314.5 438V443M1315.5 436V439M1316.5 435V437M1317.5 428V436M1318.5 423V435M1319.5 434V446M1320.5 427V437M1321.5 429V437M1322.5 422V430M1323.5 422V431M1324.5 430V439M1325.5 430V436M1326.5 427V431M1327.5 424V429M1328.5 422V434M1329.5 411V423M1330.5 418V427M1331.5 423V429M1332.5 418V425M1333.5 422V431M1334.5 413V424M1335.5 423V434M1336.5 428V434M1337.5 422V429M1338.5 423V430M1339.5 429V436M1340.5 424V436M1341.5 414V425M1342.5 415V420M1343.5 419V424M1344.5 416V425M1345.5 409V418M1346.5 417V432M1347.5 431V436M1348.5 428V435M1349.5 424V429M1350.5 423V429M1351.5 418V426M1352.5 425V433M1353.5 422V428M1354.5 421V425M1355.5 424V428M1356.5 427V429M1357.5 428V430M1358.5 424V429M1359.5 419V425M1360.5 414V420M1361.5 409V415M1362.5 411V424M1363.5 423V434M1364.5 418V428M1365.5 415V422M1366.5 421V428M1367.5 423V428M1368.5 427V432M1369.5 430V432M1370.5 429V431M1371.5 430V433M1372.5 431V434M1373.5 429V432M1374.5 426V430M1375.5 423V427M1376.5 422V426M1377.5 419V423M1378.5 422V429M1379.5 428V431M1380.5 419V430M1381.5 411V420M1382.5 419V434M1383.5 428V440M1384.5 417V429M1385.5 419V423M1386.5 416V422M1387.5 421V428M1388.5 422V426M1389.5 425V428M1390.5 427V430M1391.5 427V431M1392.5 422V428M1393.5 422V424M1394.5 422V426M1395.5 419V423M1396.5 421V426M1397.5 425V431M1398.5 429V433M1399.5 426V430M1400.5 425V427M1401.5 418V426M1402.5 409V419M1403.5 407V410M1404.5 409V414M1405.5 413V416M1406.5 415V427M1407.5 426V437M1408.5 418V428M1409.5 417V420M1410.5 414V422M1411.5 421V429M1412.5 419V427M1413.5 412V420M1414.5 417V423M1415.5 416V420M1416.5 418V425M1417.5 424V429M1418.5 426V428M1419.5 425V427M1420.5 424V426M1421.5 425V430M1422.5 427V433M1423.5 423V428M1424.5 423V431M1425.5 415V424M1426.5 419V424M1427.5 415V420M1428.5 417V426M1429.5 424V431M1430.5 417V425M1431.5 415V422M1432.5 418V427M1433.5 409V419M1434.5 417V425M1435.5 418V423M1436.5 415V419M1437.5 417V424M1438.5 420V427M1439.5 415V423M1440.5 422V430M1441.5 424V431M1442.5 418V427M1443.5 426V435M1444.5 432V435M1445.5 427V433M1446.5 424V435M1447.5 434V444M1448.5 421V435M1449.5 417V422M1450.5 419V430M1451.5 429V437M1452.5 423V434M1453.5 415V424M1454.5 420V426M1455.5 419V430M1456.5 429V441M1457.5 428V445M1458.5 444V460M1459.5 427V447M1460.5 421V428M1461.5 425V430M1462.5 427V429M1463.5 426V428M1464.5 426V428M1465.5 427V430M1466.5 423V428M1467.5 419V426M1468.5 425V432M1469.5 431V432M1470.5 430V432M1471.5 431V432M1472.5 429V432M1473.5 428V430M1474.5 427V429M1475.5 425V428M1476.5 423V426M1477.5 425V430M1478.5 423V432M1479.5 415V424M1480.5 414V424M1481.5 423V433M1482.5 419V427M1483.5 422V427M1484.5 422V428M1485.5 417V423M1486.5 414V423M1487.5 407V419M1488.5 418V431M1489.5 419V426M1490.5 416V421M1491.5 411V417M1492.5 409V429M1493.5 428V448M1494.5 421V435M1495.5 415V422M1496.5 409V423M1497.5 422V435M1498.5 417V426M1499.5 419V422M1500.5 416V422M1501.5 421V429M1502.5 427V432M1503.5 424V428M1504.5 423V426M1505.5 421V424M1506.5 419V425M1507.5 410V420M1508.5 407V411M1509.5 408V415M1510.5 414V420M1511.5 411V420M1512.5 419V429M1513.5 413V424M1514.5 423V434M1515.5 422V428M1516.5 419V424M1517.5 415V426M1518.5 425V435M1519.5 417V426M1520.5 419V427M1521.5 411V420M1522.5 419V434M1523.5 431V442M1524.5 422V432M1525.5 428V437M1526.5 419V429M1527.5 424V431M1528.5 420V428M1529.5 416V421M1530.5 420V425M1531.5 421V436M1532.5 431V450M1533.5 413V432M1534.5 416V419M1535.5 412V419M1536.5 405V413M1537.5 407V422M1538.5 421V436M1539.5 424V433M1540.5 418V425M1541.5 424V432M1542.5 415V425M1543.5 412V424M1544.5 423V435M1545.5 422V430M1546.5 419V423M1547.5 416V420M1548.5 413V417M1549.5 415V418M1550.5 416V418M1551.5 415V418M1552.5 417V423M1553.5 422V429M1554.5 418V433M1555.5 404V419M1556.5 412V420M1557.5 416V422M1558.5 421V428M1559.5 419V428M1560.5 411V420M1561.5 412V426M1562.5 398V413M1563.5 395V406M1564.5 405V429M1565.5 428V442M1566.5 426V441M1567.5 413V427M1568.5 412V419M1569.5 406V414M1570.5 413V421M1571.5 412V418M1572.5 409V416M1573.5 415V425M1574.5 424V428M1575.5 421V431M1576.5 413V422M1577.5 416V420M1578.5 417V427M1579.5 426V436M1580.5 421V431M1581.5 417V425M1582.5 420V432M1583.5 409V422M1584.5 421V433M1585.5 427V432M1586.5 423V428M1587.5 421V425M1588.5 424V428M1589.5 423V426M1590.5 416V425M1591.5 408V417M1592.5 410V420M1593.5 419V426M1594.5 416V422M1595.5 416V419M1596.5 409V417M1597.5 404V413M1598.5 412V421M1599.5 420V423M1600.5 419V425M1601.5 415V420M1602.5 418V427M1603.5 422V431M1604.5 414V423M1605.5 420V426M1606.5 421V425M1607.5 424V429M1608.5 419V425M1609.5 415V420M1610.5 414V421M1611.5 420V428M1612.5 406V424M1613.5 392V407M1614.5 405V420M1615.5 419V427M1616.5 425V431M1617.5 418V426M1618.5 416V423M1619.5 422V433M1620.5 425V438M1621.5 414V426M1622.5 420V428M1623.5 427V435M1624.5 434V441M1625.5 425V436M1626.5 421V428M1627.5 425V435M1628.5 417V426M1629.5 419V427M1630.5 424V432M1631.5 416V425M1632.5 419V424M1633.5 416V420M1634.5 417V424M1635.5 423V429M1636.5 428V432M1637.5 429V435M1638.5 421V430M1639.5 417V424M1640.5 422V430M1641.5 416V423M1642.5 421V426M1643.5 421V430M1644.5 429V438M1645.5 421V430M1646.5 422V428M1647.5 427V434M1648.5 423V434M1649.5 412V430M1650.5 429V447M1651.5 417V433M1652.5 424V432M1653.5 429V437M1654.5 428V443M1655.5 413V429M1656.5 412V416M1657.5 415V420M1658.5 414V424M1659.5 423V434M1660.5 429V436M1661.5 433V441M1662.5 426V434M1663.5 431V436M1664.5 429V434M1665.5 425V430M1666.5 424V428M1667.5 427V433M1668.5 428V434M1669.5 423V434M1670.5 429V444M1671.5 414V430M1672.5 418V438M1673.5 434V453M1674.5 416V435M1675.5 422V435M1676.5 430V440M1677.5 421V431M1678.5 425V431M1679.5 427V432M1680.5 423V428M1681.5 424V432M1682.5 416V428M1683.5 427V439M1684.5 422V431M1685.5 424V430M1686.5 425V433M1687.5 418V426M1688.5 422V440M1689.5 432V452M1690.5 412V433M1691.5 420V430M1692.5 429V433M1693.5 428V436M1694.5 418V429M1695.5 415V419M1696.5 416V423M1697.5 422V427M1698.5 421V425M1699.5 424V427M1700.5 426V427M1701.5 425V431M1702.5 430V436M1703.5 429V437M1704.5 422V430M1705.5 423V429M1706.5 428V435M1707.5 434V437M1708.5 433V438M1709.5 429V434M1710.5 428V432M1711.5 431V435M1712.5 426V432M1713.5 423V427M1714.5 425V429M1715.5 428V441M1716.5 440V451M1717.5 433V442M1718.5 433V442M1719.5 424V434M1720.5 424V430M1721.5 429V435M1722.5 429V433M1723.5 429V436M1724.5 433V443M1725.5 424V434M1726.5 431V439M1727.5 428V436M1728.5 423V429M1729.5 421V424M1730.5 422V426M1731.5 419V428M1732.5 427V436M1733.5 424V433M1734.5 418V425M1735.5 423V429M1736.5 424V433M1737.5 432V442M1738.5 428V435M1739.5 429V435M1740.5 430V437M1741.5 424V435M1742.5 434V444M1743.5 424V435M1744.5 425V433M1745.5 432V438M1746.5 429V438M1747.5 437V446M1748.5 432V440M1749.5 431V433M1750.5 426V432M1751.5 423V427M1752.5 420V426M1753.5 416V421M1754.5 417V431M1755.5 430V444M1756.5 418V431M1757.5 419V427M1758.5 426V433M1759.5 428V434M1760.5 424V430M1761.5 426V436M1762.5 417V427M1763.5 426V437M1764.5 423V431M1765.5 427V434M1766.5 433V441M1767.5 435V446M1768.5 424V436M1769.5 423V427M1770.5 426V433M1771.5 432V437M1772.5 431V439M1773.5 424V432M1774.5 426V431M1775.5 423V432M1776.5 414V424M1777.5 422V430M1778.5 420V429M1779.5 423V436M1780.5 412V424M1781.5 421V431M1782.5 422V431M1783.5 430V440M1784.5 427V438M1785.5 418V430M1786.5 429V441M1787.5 430V438M1788.5 426V431M1789.5 429V443M1790.5 442V455M1791.5 436V447M1792.5 434V439M1793.5 436V442M1794.5 431V438M1795.5 435V445M1796.5 427V436M1797.5 426V446M1798.5 443V465M1799.5 421V444M1800.5 424V428M1801.5 427V431M1802.5 430V433M1803.5 432V440M1804.5 434V447M1805.5 421V435M1806.5 419V435M1807.5 434V451M1808.5 423V437M1809.5 425V433M1810.5 429V438M1811.5 421V430M1812.5 424V430M1813.5 429V433M1814.5 419V430M1815.5 413V424M1816.5 423V435M1817.5 423V431M1818.5 419V425M1819.5 424V430M1820.5 426V436M1821.5 435V445M1822.5 425V436M1823.5 428V431M1824.5 426V432M1825.5 425V437M1826.5 415V426M1827.5 419V429M1828.5 428V435M1829.5 430V435M1830.5 427V433M1831.5 427V437M1832.5 418V431M1833.5 430V443M1834.5 427V439M1835.5 419V428M1836.5 421V433M1837.5 431V443M1838.5 420V432M1839.5 425V438M1840.5 437V446M1841.5 436V447M1842.5 427V437M1843.5 434V441M1844.5 434V438M1845.5 431V436M1846.5 425V432M1847.5 422V433M1848.5 432V442M1849.5 426V435M1850.5 420V428M1851.5 412V427M1852.5 426V440M1853.5 432V437M1854.5 431V433M1855.5 431V436M1856.5 431V441M1857.5 422V432M1858.5 424V430M1859.5 429V437M1860.5 436V445M1861.5 440V448M1862.5 433V441M1863.5 434V440M1864.5 439V444M1865.5 442V444M1866.5 436V443M1867.5 433V439M1868.5 438V445M1869.5 431V440M1870.5 429V442M1871.5 435V454M1872.5 416V436M1873.5 430V444M1874.5 431V439M1875.5 427V432M1876.5 425V431M1877.5 430V436M1878.5 431V435M1879.5 431V436M1880.5 433V440M1881.5 427V434M1882.5 432V438M1883.5 429V437M1884.5 433V445M1885.5 421V434M1886.5 421V443M1887.5 442V464M1888.5 437V451M1889.5 436V441M1890.5 433V454M1891.5 447V474M1892.5 422V448M1893.5 435V450M1894.5 439V446M1895.5 435V440M1896.5 431V438M1897.5 437V444M1898.5 435V440M1899.5 436V441M1900.5 440V447M1901.5 434V450M1902.5 420V439M1903.5 438V457M1904.5 427V442M1905.5 429V436M1906.5 435V439M1907.5 426V436M1908.5 420V427M1909.5 420V432M1910.5 431V451M1911.5 444V459M1912.5 429V445M1913.5 429V440M1914.5 439V449M1915.5 434V442M1916.5 433V438M1917.5 428V443M1918.5 442V457M1919.5 433V448M1920.5 428V434M1921.5 427V436M1922.5 435V443M1923.5 439V442M1924.5 437V440M1925.5 436V442M1926.5 430V440M1927.5 439V448M1928.5 435V443M1929.5 433V436M1930.5 433V437M1931.5 436V440M1932.5 433V438M1933.5 431V434M1934.5 432V433M1935.5 431V441M1936.5 440V449M1937.5 434V444M1938.5 443V452M1939.5 434V448M1940.5 426V437M1941.5 436V446M1942.5 431V439M1943.5 433V436M1944.5 435V437M1945.5 432V437M1946.5 429V433M1947.5 428V430M1948.5 429V431M1949.5 430V437M1950.5 436V442M1951.5 429V441M1952.5 420V437M1953.5 436V453M1954.5 434V448M1955.5 427V435M1956.5 432V439M1957.5 430V437M1958.5 436V443M1959.5 442V446M1960.5 443V450M1961.5 438V444M1962.5 438V441M1963.5 430V439M1964.5 424V432M1965.5 431V439M1966.5 433V437M1967.5 432V436M1968.5 435V446M1969.5 445V454M1970.5 439V448M1971.5 437V440M1972.5 435V438M1973.5 435V442M1974.5 440V448M1975.5 432V441M1976.5 438V445M1977.5 440V446M1978.5 434V441M1979.5 434V442M1980.5 441V449M1981.5 435V444M1982.5 431V436M1983.5 431V433M1984.5 432V436M1985.5 435V447M1986.5 446V458M1987.5 443V453M1988.5 451V463M1989.5 432V452M1990.5 421V433M1991.5 419V429M1992.5 428V438M1993.5 430V435M1994.5 432V439M1995.5 436V444M1996.5 428V437M1997.5 434V442M1998.5 427V435M1999.5 431V440M2000.5 439V448M2001.5 445V452M2002.5 439V446M2003.5 430V440M2004.5 421V431M2005.5 429V438M2006.5 430V436M2007.5 435V442M2008.5 440V448M2009.5 446V454M2010.5 431V447M2011.5 424V433M2012.5 430V440M2013.5 422V433M2014.5 432V444M2015.5 427V440M2016.5 439V451M2017.5 438V445M2018.5 437V439M2019.5 437V438M2020.5 434V438M2021.5 432V440M2022.5 439V447M2023.5 435V442M2024.5 439V443M2025.5 440V442M2026.5 438V441M2027.5 435V439M2028.5 435V444M2029.5 443V451M2030.5 438V448M2031.5 445V457M2032.5 435V446M2033.5 438V446M2034.5 430V439M2035.5 431V436M2036.5 427V432M2037.5 431V439M2038.5 433V444M2039.5 424V434M2040.5 432V440M2041.5 431V439M2042.5 438V446M2043.5 442V445M2044.5 440V444M2045.5 443V446M2046.5 439V445M2047.5 432V440M2048.5 428V440M2049.5 439V450M2050.5 435V443M2051.5 442V450M2052.5 446V449M2053.5 437V451M2054.5 424V438M2055.5 431V440M2056.5 437V441M2057.5 434V446M2058.5 445V457M2059.5 443V451M2060.5 441V447M2061.5 435V442M2062.5 433V441M2063.5 426V434M2064.5 430V436M2065.5 433V445M2066.5 444V455M2067.5 441V449M2068.5 440V453M2069.5 428V441M2070.5 437V448M2071.5 426V438M2072.5 434V444M2073.5 432V438M2074.5 437V451M2075.5 447V459M2076.5 436V448M2077.5 439V447M2078.5 440V453M2079.5 428V446M2080.5 445V463M2081.5 435V450M2082.5 449V463M2083.5 451V457M2084.5 451V455M2085.5 454V459M2086.5 452V460M2087.5 444V453M2088.5 446V453M2089.5 452V458M2090.5 449V454M2091.5 446V451M2092.5 443V447M2093.5 443V452M2094.5 451V460M2095.5 447V454M2096.5 447V452M2097.5 450V455M2098.5 446V452M2099.5 451V457M2100.5 446V455M2101.5 438V447M2102.5 433V439M2103.5 428V434M2104.5 433V440M2105.5 439V444M2106.5 443V448M2107.5 447V449M2108.5 444V448M2109.5 443V446M2110.5 445V457M2111.5 456V464M2112.5 446V460M2113.5 438V447M2114.5 443V450M2115.5 434V447M2116.5 425V444M2117.5 443V463M2118.5 450V458M2119.5 448V451M2120.5 447V449M2121.5 445V448M2122.5 445V450M2123.5 449V460M2124.5 459V468M2125.5 445V461M2126.5 437V446M2127.5 445V454M2128.5 441V449M2129.5 448V457M2130.5 442V450M2131.5 444V456M2132.5 451V464M2133.5 439V452M2134.5 445V453M2135.5 445V449M2136.5 448V463M2137.5 460V472M2138.5 448V461M2139.5 459V471M2140.5 454V467M2141.5 444V455M2142.5 446V451M2143.5 441V447M2144.5 446V453M2145.5 452V454M2146.5 450V454M2147.5 444V451M2148.5 441V452M2149.5 451V461M2150.5 449V458M2151.5 443V450M2152.5 444V447M2153.5 446V452M2154.5 448V457M2155.5 439V449M2156.5 441V448M2157.5 447V455M2158.5 451V457M2159.5 443V452M2160.5 440V445M2161.5 444V449M2162.5 445V451M2163.5 450V456M2164.5 448V457M2165.5 440V449M2166.5 443V450M2167.5 449V453M2168.5 447V460M2169.5 459V473M2170.5 448V462M2171.5 446V458M2172.5 457V469M2173.5 453V462M2174.5 450V454M2175.5 443V451M2176.5 440V449M2177.5 448V457M2178.5 445V451M2179.5 444V449M2180.5 447V452M2181.5 442V450M2182.5 449V458M2183.5 444V452M2184.5 446V452M2185.5 451V458M2186.5 457V463M2187.5 453V466M2188.5 441V454M2189.5 444V449M2190.5 444V450M2191.5 438V445M2192.5 441V450M2193.5 449V456M2194.5 448V453M2195.5 450V456M2196.5 445V451M2197.5 449V454M2198.5 452V453M2199.5 452V455M2200.5 454V460M2201.5 447V461M2202.5 434V448M2203.5 441V449M2204.5 444V450M2205.5 449V459M2206.5 456V463M2207.5 445V457M2208.5 440V458M2209.5 457V475M2210.5 446V461M2211.5 447V452M2212.5 443V448M2213.5 446V452M2214.5 451V455M2215.5 451V456M2216.5 447V458M2217.5 457V468M2218.5 447V458M2219.5 452V459M2220.5 452V458M2221.5 447V453M2222.5 450V455M2223.5 454V459M2224.5 453V462M2225.5 445V454" fill="none" stroke="#a2a2a2" stroke-width="1"/>
<rect x="1111" y="148" width="1" height="56" fill="#c8c8c8"/>
<rect x="1111" y="203" width="1" height="664" fill="#cc7070"/>
<rect x="1112" y="203" width="1" height="664" fill="#b85252"/>
<rect x="1110" y="205" width="1" height="662" fill="#cc7070" fill-opacity="0.4"/>
<rect x="1112" y="181" width="1.500" height="23" fill="#a01020"/>
<rect x="37" y="809" width="8" height="8" fill="#9ab83e"/>
<path d="M37 818.5H2186" stroke="#c4c890" stroke-width="1" stroke-dasharray="1 1" fill="none"/>
</svg>
<div class="t" style="left:170.6px;top:157px;width:80px;text-align:center;font-size:12px;color:#b4c8e8">144,850</div>
<div class="t" style="left:470.9px;top:157px;width:80px;text-align:center;font-size:12px;color:#b4c8e8">144,900</div>
<div class="t" style="left:771.2px;top:157px;width:80px;text-align:center;font-size:12px;color:#b4c8e8">144,950</div>
<div class="t" style="left:1071.5px;top:157px;width:80px;text-align:center;font-size:12px;color:#b4c8e8">145,000</div>
<div class="t" style="left:1371.8px;top:157px;width:80px;text-align:center;font-size:12px;color:#b4c8e8">145,050</div>
<div class="t" style="left:1672.1px;top:157px;width:80px;text-align:center;font-size:12px;color:#b4c8e8">145,100</div>
<div class="t" style="left:1972.4px;top:157px;width:80px;text-align:center;font-size:12px;color:#b4c8e8">145,150</div>
<div class="t" style="left:0;top:207.3px;width:26.500px;text-align:right;font-size:12.300px;color:#a8c0e4">-60</div>
<div class="t" style="left:0;top:240.0px;width:26.500px;text-align:right;font-size:12.300px;color:#a8c0e4">-65</div>
<div class="t" style="left:0;top:272.6px;width:26.500px;text-align:right;font-size:12.300px;color:#a8c0e4">-70</div>
<div class="t" style="left:0;top:305.2px;width:26.500px;text-align:right;font-size:12.300px;color:#a8c0e4">-75</div>
<div class="t" style="left:0;top:337.9px;width:26.500px;text-align:right;font-size:12.300px;color:#a8c0e4">-80</div>
<div class="t" style="left:0;top:370.6px;width:26.500px;text-align:right;font-size:12.300px;color:#a8c0e4">-85</div>
<div class="t" style="left:0;top:403.2px;width:26.500px;text-align:right;font-size:12.300px;color:#a8c0e4">-90</div>
<div class="t" style="left:0;top:435.8px;width:26.500px;text-align:right;font-size:12.300px;color:#a8c0e4">-95</div>
<div class="t" style="left:0;top:468.5px;width:26.500px;text-align:right;font-size:12.300px;color:#a8c0e4">-100</div>
<div class="t" style="left:0;top:501.1px;width:26.500px;text-align:right;font-size:12.300px;color:#a8c0e4">-105</div>
<div class="t" style="left:0;top:533.8px;width:26.500px;text-align:right;font-size:12.300px;color:#a8c0e4">-110</div>
<div class="t" style="left:0;top:566.4px;width:26.500px;text-align:right;font-size:12.300px;color:#a8c0e4">-115</div>
<div class="t" style="left:0;top:599.1px;width:26.500px;text-align:right;font-size:12.300px;color:#a8c0e4">-120</div>
<div class="t" style="left:0;top:631.8px;width:26.500px;text-align:right;font-size:12.300px;color:#a8c0e4">-125</div>
<div class="t" style="left:0;top:664.4px;width:26.500px;text-align:right;font-size:12.300px;color:#a8c0e4">-130</div>
<div class="t" style="left:0;top:697.0px;width:26.500px;text-align:right;font-size:12.300px;color:#a8c0e4">-135</div>
<div class="t" style="left:0;top:729.7px;width:26.500px;text-align:right;font-size:12.300px;color:#a8c0e4">-140</div>
<div class="t" style="left:0;top:762.3px;width:26.500px;text-align:right;font-size:12.300px;color:#a8c0e4">-145</div>
<div class="t" style="left:0;top:795.0px;width:26.500px;text-align:right;font-size:12.300px;color:#a8c0e4">-150</div>
<div class="t" style="left:0;top:827.6px;width:26.500px;text-align:right;font-size:12.300px;color:#a8c0e4">-155</div>
<div class="t" style="left:47px;top:805.500px;font-size:8.500px;color:#c8d070">-G</div>
<div class="t " style="left:1959px;top:869.5px;font-size:12.5px;color:#f4f43a;letter-spacing:0.174px;">-84,2Hz</div>
<div class="t " style="left:2042px;top:869.5px;font-size:12.5px;color:#f4f43a;letter-spacing:0.287px;">-16,8dBm</div>
<div class="t " style="left:2120px;top:869.5px;font-size:12.5px;color:#f4f43a;letter-spacing:0.188px;">144,999 916 MHz</div>
<div class="a" id="tbar"></div>
<svg class="a" style="left:6px;top:7px" width="14" height="14" viewBox="0 0 14 14"><rect x="0.5" y="0.5" width="13" height="13" fill="#fff" stroke="#a8b8d0" stroke-width="1"/><rect x="6" y="0.5" width="7" height="7" fill="#f0c830" stroke="#9a7a10" stroke-width="0.8"/><rect x="7.500" y="2" width="4" height="4" fill="#f8dc60"/><rect x="0.8" y="4.800" width="4.400" height="5" fill="#b83018" stroke="#6a1a0c" stroke-width="0.8"/><rect x="6" y="9" width="5.200" height="4" rx="1" fill="#3a7ae0"/></svg>
<div class="t " style="left:26.5px;top:9px;font-size:12px;color:#929292;letter-spacing:-0.530px;">PowerSDR™ OpenHPSDR mRX PS v3.4.9 (3/19/18)</div>
<svg class="a" style="left:2095px;top:0" width="131" height="30" viewBox="0 0 131 30"><g stroke="#7a7a7a" stroke-width="1" fill="none"><path d="M12 14.5 H22"/><rect x="57.500" y="9.500" width="9" height="9"/><path d="M103 9 L113 19 M113 9 L103 19"/></g></svg>
<div class="t " style="left:12px;top:36px;font-size:12px;color:#fff;letter-spacing:-0.272px;">Setup</div>
<div class="t " style="left:61px;top:36px;font-size:12px;color:#fff;letter-spacing:0.276px;">Memory</div>
<div class="t " style="left:125px;top:36px;font-size:12px;color:#fff;letter-spacing:-0.309px;">Wave</div>
<div class="t " style="left:173px;top:36px;font-size:12px;color:#fff;letter-spacing:-0.337px;">Equalizer</div>
<div class="t " style="left:239px;top:36px;font-size:12px;color:#fff;letter-spacing:-1.003px;">XVTRs</div>
<div class="t " style="left:291px;top:36px;font-size:12px;color:#fff;letter-spacing:-0.667px;">CWX</div>
<div class="t " style="left:336px;top:36px;font-size:12px;color:#fff;letter-spacing:-0.113px;">Diversity</div>
<div class="t " style="left:400px;top:36px;font-size:12px;color:#fff;letter-spacing:-0.451px;">Expand</div>
<div class="t " style="left:457px;top:36px;font-size:12px;color:#fff;letter-spacing:-0.086px;">Display Controls</div>
<div class="t " style="left:562px;top:36px;font-size:12px;color:#fff;letter-spacing:-1.200px;">DSP</div>
<div class="t " style="left:602px;top:36px;font-size:12px;color:#6c7078;letter-spacing:-0.112px;">Filter</div>
<div class="t " style="left:647px;top:36px;font-size:12px;color:#fff;letter-spacing:-1.115px;">RX2</div>
<div class="t " style="left:686px;top:36px;font-size:12px;color:#fff;letter-spacing:-0.040px;">Linearity</div>
<div class="t " style="left:750px;top:36px;font-size:12px;color:#fff;letter-spacing:-0.836px;">RA</div>
<div class="a" style="left:593px;top:31px;width:45px;height:21px;border:1px solid #3a7ad0"></div>
<div class="a" style="left:27px;top:57px;width:107px;height:31px;background:linear-gradient(#484848 0%,#363636 35%,#1e1e1e 70%,#0a0a0a 100%);border-top:1px solid #5a5a5a;border-left:1px solid #1a1a1a;border-bottom:2px solid #000"></div>
<div class="a" style="left:88px;top:56px;width:46px;height:32px;background:linear-gradient(#484848 0%,#323232 35%,#181818 70%,#060606 100%);border-top:1px solid #666;border-left:1px solid #2a2a2a;border-bottom:2px solid #000"></div>
<div class="t " style="left:39.5px;top:61.5px;font-size:12.5px;color:#e8e8e8;font-weight:bold;letter-spacing:-0.650px;">START</div>
<div class="t " style="left:99px;top:61px;font-size:12px;color:#d0d0d0;font-weight:bold;letter-spacing:-1.200px;">RX2</div>
<div class="a" style="left:40px;top:76px;width:36px;height:6px;border-radius:3px;background:#08c0f0"></div>
<div class="a" style="left:149px;top:63px;width:11px;height:11px;border-radius:50%;border:2.5px solid #fff;background:#1a1c22"></div>
<div class="t " style="left:165.5px;top:63px;font-size:11.5px;color:#fff;letter-spacing:-0.792px;">RX1</div>
<div class="a" style="left:203.500px;top:63px;width:11px;height:11px;border-radius:50%;background:#fff"></div>
<div class="t " style="left:220.5px;top:63px;font-size:11.5px;color:#fff;letter-spacing:-0.625px;">RX2</div>
<div class="t " style="left:10px;top:99px;font-size:11.5px;color:#fff;letter-spacing:-0.602px;">AF</div>
<div class="sld" style="left:32px;top:93px;width:100px;height:24px"><i></i><b style="left:2px"></b></div>
<div class="t " style="left:139.5px;top:99px;font-size:11.5px;color:#fff;letter-spacing:-0.781px;">PWR</div>
<div class="sld" style="left:169px;top:93px;width:100px;height:24px"><i></i><b style="left:14px"></b></div>
<div class="t " style="left:10px;top:125px;font-size:11.5px;color:#fff;letter-spacing:-0.922px;">RF</div>
<div class="sld" style="left:32px;top:119px;width:100px;height:24px"><i></i><b style="left:81px"></b></div>
<div class="cmb" style="left:134px;top:122px;width:50px;height:21px;"><svg width="9" height="6" viewBox="0 0 9 6"><path d="M0.5 0.8 L4.5 4.8 L8.5 0.8" fill="none" stroke="#333" stroke-width="1.1"/></svg></div><div class="t " style="left:138px;top:127.0px;font-size:11px;color:#000;letter-spacing:-0.635px;">Med</div>
<div class="cmb" style="left:191px;top:122px;width:55px;height:21px;"><svg width="9" height="6" viewBox="0 0 9 6"><path d="M0.5 0.8 L4.5 4.8 L8.5 0.8" fill="none" stroke="#333" stroke-width="1.1"/></svg></div><div class="t " style="left:195px;top:127.0px;font-size:11px;color:#000;letter-spacing:-0.526px;">0dB</div>
<div class="btn off" style="left:875px;top:62px;width:50px;height:23px;line-height:21px;">VOX</div>
<div class="btn mid" style="left:935px;top:62px;width:50px;height:23px;line-height:21px;">MON</div>
<div class="btn blue" style="left:875px;top:89px;width:50px;height:23px;line-height:21px;">DUP</div>
<div class="btn off" style="left:935px;top:89px;width:50px;height:23px;line-height:21px;">TUN</div>
<div class="btn " style="left:875px;top:116px;width:50px;height:23px;line-height:21px;">CTUN</div>
<div class="btn off" style="left:935px;top:116px;width:50px;height:23px;line-height:21px;">MOX</div>
<div class="a" style="left:995px;top:60px;width:232px;height:81px;border:1px solid #d8d8d8"></div>
<div class="t" style="left:1002px;top:54.500px;font-size:12px;font-weight:bold;color:#e8141c;background:#23262e;padding:0 3px">VFO A</div>
<div class="a" style="left:1004px;top:71px;width:214px;height:36px;background:#000;border:1px solid #e8e8e8"></div>
<div class="t" style="left:1007px;top:77px;font-size:8.500px;font-weight:bold;color:#ff7a1c">FM</div>
<div class="t " style="left:1074.5px;top:76.5px;font-size:26px;color:#ffff3a;letter-spacing:0.359px;">145,000</div>
<div class="t" style="left:1180px;top:80px;font-size:21.500px;color:#ff5a14">000</div>
<div class="a" style="left:1004px;top:111px;width:186px;height:24px;background:#000;border:1px solid #e8e8e8"></div>
<div class="t " style="left:1026.5px;top:114.5px;font-size:16.5px;color:#3ea070;letter-spacing:-0.190px;">2M Repeater Inputs</div>
<div class="a" style="left:1194px;top:110px;width:27px;height:26px;background:#ec1c2c;border-top:1px solid #ff6a6a;border-left:1px solid #ff5a5a;border-right:1px solid #a01018;border-bottom:1px solid #a01018"></div>
<div class="t" style="left:1200px;top:116.500px;font-size:13px;font-weight:bold;color:#fff">TX</div>
<div class="cmb" style="left:1894px;top:61px;width:72px;height:21px;"><svg width="9" height="6" viewBox="0 0 9 6"><path d="M0.5 0.8 L4.5 4.8 L8.5 0.8" fill="none" stroke="#333" stroke-width="1.1"/></svg></div><div class="t " style="left:1898px;top:66.0px;font-size:11px;color:#000;letter-spacing:-0.430px;">Signal</div>
<div class="a" style="left:1972px;top:60px;width:143px;height:33.500px;background:#000;border:1.500px solid #f0f0f0"></div>
<div class="t" style="left:1987px;top:65px;font-size:24px;color:#ffff3a">-16,5 dBm</div>
<div class="cmb" style="left:2120px;top:61px;width:72px;height:21px;"><svg width="9" height="6" viewBox="0 0 9 6"><path d="M0.5 0.8 L4.5 4.8 L8.5 0.8" fill="none" stroke="#333" stroke-width="1.1"/></svg></div><div class="t " style="left:2124px;top:66.0px;font-size:11px;color:#000;letter-spacing:-0.326px;">Fwd Pwr</div>
<div class="a" style="left:1899px;top:103px;width:288.500px;height:26px;border-top:1px solid #8a8a8a;border-left:1.5px solid #c8c8c8;border-right:1.5px solid #e8e8e8;border-bottom:2px solid #fff;background:repeating-linear-gradient(90deg,rgba(0,0,0,0) 0 7px,#0a0a0a 7px 8px),linear-gradient(90deg,#343434,#bcbcbc)"></div>
<div class="t lbl" style="left:1899px;top:130.500px;width:40px;text-align:center;font-size:11.500px">1</div>
<div class="t lbl" style="left:1926px;top:130.500px;width:40px;text-align:center;font-size:11.500px">3</div>
<div class="t lbl" style="left:1959px;top:130.500px;width:40px;text-align:center;font-size:11.500px">5</div>
<div class="t lbl" style="left:1989px;top:130.500px;width:40px;text-align:center;font-size:11.500px">7</div>
<div class="t lbl" style="left:2019px;top:130.500px;width:40px;text-align:center;font-size:11.500px">9</div>
<div class="t lbl" style="left:2061px;top:130.500px;width:40px;text-align:center;font-size:11.500px">+20</div>
<div class="t lbl" style="left:2106px;top:130.500px;width:40px;text-align:center;font-size:11.500px">+40</div>
<div class="t lbl" style="left:2151px;top:130.500px;width:40px;text-align:center;font-size:11.500px">+60</div>
<div class="t " style="left:0px;top:895px;font-size:11.5px;color:#fff;letter-spacing:-0.668px;">Pan:</div>
<div class="a" style="left:29px;top:887px;width:924px;height:24px;border:1px solid #5a5a5a;border-bottom-color:#707070;background:linear-gradient(90deg,#5a5a5a 0,#2c2c2c 8px,rgba(40,40,40,0) 20px,rgba(40,40,40,0) calc(100% - 24px),#484848 calc(100% - 9px),#6c6c6c 100%),linear-gradient(#1c1c1c,#2c2c2c 50%,#3a3a3a)"><i class="a" style="left:34px;right:50px;top:9px;height:4px;background:#000;border-radius:2px;box-shadow:0 0 3px 1px #0a0a0a"></i><b class="a" style="left:454px;top:1px;bottom:1px;width:15px;background:linear-gradient(#3a3a3a,#0a0a0a 40%,#000)"><i class="a" style="left:6.500px;top:4px;bottom:4px;width:2px;background:#fff"></i></b></div>
<div class="btn " style="left:953px;top:887px;width:50px;height:24px;line-height:22px;">Center</div>
<div class="cmb" style="left:1008px;top:887px;width:88px;height:21px;"><svg width="9" height="6" viewBox="0 0 9 6"><path d="M0.5 0.8 L4.5 4.8 L8.5 0.8" fill="none" stroke="#333" stroke-width="1.1"/></svg></div><div class="t " style="left:1012px;top:892.0px;font-size:11px;color:#000;letter-spacing:-0.189px;">Panadapter</div>
<div class="t " style="left:1103px;top:893.5px;font-size:11.5px;color:#fff;letter-spacing:-0.419px;">Zoom:</div>
<div class="a" style="left:1141px;top:887px;width:924px;height:24px;border:1px solid #5a5a5a;border-bottom-color:#707070;background:linear-gradient(90deg,#5a5a5a 0,#2c2c2c 8px,rgba(40,40,40,0) 20px,rgba(40,40,40,0) calc(100% - 24px),#484848 calc(100% - 9px),#6c6c6c 100%),linear-gradient(#1c1c1c,#2c2c2c 50%,#3a3a3a)"><i class="a" style="left:34px;right:50px;top:9px;height:4px;background:#000;border-radius:2px;box-shadow:0 0 3px 1px #0a0a0a"></i><b class="a" style="left:2px;top:1px;bottom:1px;width:15px;background:linear-gradient(#3a3a3a,#0a0a0a 40%,#000)"><i class="a" style="left:6.500px;top:4px;bottom:4px;width:2px;background:#fff"></i></b></div>
<div class="btn " style="left:2065px;top:888px;width:40px;height:23px;line-height:21px;">0.5x</div>
<div class="btn " style="left:2105px;top:888px;width:40px;height:23px;line-height:21px;">1x</div>
<div class="btn " style="left:2145px;top:888px;width:40px;height:23px;line-height:21px;">2x</div>
<div class="btn " style="left:2185px;top:888px;width:40px;height:23px;line-height:21px;">4x</div>
<div class="btn blue" style="left:761px;top:916px;width:50px;height:23px;line-height:21px;">144</div>
<div class="btn dim" style="left:811px;top:916px;width:50px;height:23px;line-height:21px;">1</div>
<div class="btn dim" style="left:861px;top:916px;width:50px;height:23px;line-height:21px;">2</div>
<div class="btn dim" style="left:911px;top:916px;width:50px;height:23px;line-height:21px;">3</div>
<div class="btn dim" style="left:961px;top:916px;width:50px;height:23px;line-height:21px;">4</div>
<div class="btn dim" style="left:1011px;top:916px;width:50px;height:23px;line-height:21px;">5</div>
<div class="btn dim" style="left:1061px;top:916px;width:50px;height:23px;line-height:21px;">6</div>
<div class="btn dim" style="left:1111px;top:916px;width:50px;height:23px;line-height:21px;">7</div>
<div class="btn dim" style="left:1161px;top:916px;width:50px;height:23px;line-height:21px;">8</div>
<div class="btn dim" style="left:1211px;top:916px;width:50px;height:23px;line-height:21px;">9</div>
<div class="btn dim" style="left:1261px;top:916px;width:50px;height:23px;line-height:21px;">10</div>
<div class="btn dim" style="left:1311px;top:916px;width:50px;height:23px;line-height:21px;">11</div>
<div class="btn dim" style="left:1361px;top:916px;width:50px;height:23px;line-height:21px;">12</div>
<div class="btn dim" style="left:1411px;top:916px;width:50px;height:23px;line-height:21px;">13</div>
<div class="btn " style="left:1461px;top:916px;width:50px;height:23px;line-height:21px;">HF</div>
<div class="btn " style="left:811px;top:939px;width:50px;height:23px;line-height:19px;">LSB</div>
<div class="btn " style="left:861px;top:939px;width:50px;height:23px;line-height:19px;">USB</div>
<div class="btn " style="left:911px;top:939px;width:50px;height:23px;line-height:19px;">DSB</div>
<div class="btn " style="left:961px;top:939px;width:50px;height:23px;line-height:19px;">CWL</div>
<div class="btn " style="left:1011px;top:939px;width:50px;height:23px;line-height:19px;">CWU</div>
<div class="btn blue" style="left:1061px;top:939px;width:50px;height:23px;line-height:19px;">FM</div>
<div class="btn " style="left:1111px;top:939px;width:50px;height:23px;line-height:19px;">AM</div>
<div class="btn " style="left:1161px;top:939px;width:50px;height:23px;line-height:19px;">SAM</div>
<div class="btn " style="left:1211px;top:939px;width:50px;height:23px;line-height:19px;">SPEC</div>
<div class="btn " style="left:1261px;top:939px;width:50px;height:23px;line-height:19px;">DIGL</div>
<div class="btn " style="left:1311px;top:939px;width:50px;height:23px;line-height:19px;">DIGU</div>
<div class="btn " style="left:1361px;top:939px;width:50px;height:23px;line-height:19px;">DRM</div>
</div>
<div class="win" style="left:1584px;top:1013px;width:700px;height:160px;box-shadow:0 0 10px rgba(0,0,0,0.35)"><div class="wt" style="height:31px"></div></div>
<svg class="a" style="left:1592px;top:1020px" width="16" height="16" viewBox="0 0 16 16"><defs><linearGradient id="ag" x1="0" y1="0" x2="1" y2="1"><stop offset="0" stop-color="#9cc0d0"/><stop offset="0.45" stop-color="#4a88a8"/><stop offset="1" stop-color="#1f5874"/></linearGradient></defs><rect x="0.5" y="0.5" width="15" height="14.500" rx="1.2" fill="url(#ag)" stroke="#1c3c50" stroke-width="0.9"/><path d="M6.500 2.500V9.200M10 1.500V9.200M3.500 9.500H12.800M4.300 6.500Q4.300 9 6.500 9.200" fill="none" stroke="#08121c" stroke-width="1.300"/><rect x="1.500" y="11.300" width="13" height="1.800" fill="#dfe6ec"/><path d="M2.500 12.200H13.500" stroke="#30485a" stroke-width="0.8" stroke-dasharray="2 1"/></svg>
<div class="t " style="left:1613.5px;top:1022.5px;font-size:12px;color:#9a9a9a;letter-spacing:-0.620px;">XVTR Setup</div>
<div class="t " style="left:1602px;top:1069.5px;font-size:11px;letter-spacing:-0.054px;">Enabled</div>
<div class="t " style="left:1658.5px;top:1069.5px;font-size:11px;letter-spacing:-0.188px;">Band Button</div>
<div class="t " style="left:1736.5px;top:1069.5px;font-size:11px;letter-spacing:0.060px;">Button Text</div>
<div class="t " style="left:1816.5px;top:1060.5px;font-size:11px;letter-spacing:0.069px;">LO Offset</div>
<div class="t " style="left:1816.5px;top:1073.5px;font-size:11px;letter-spacing:0.013px;">(MHz)</div>
<div class="t " style="left:1904.5px;top:1060.5px;font-size:11px;letter-spacing:0.039px;">LO Error</div>
<div class="t " style="left:1904.5px;top:1073.5px;font-size:11px;letter-spacing:0.144px;">(kHz)</div>
<div class="t " style="left:1968px;top:1069.5px;font-size:11px;letter-spacing:0.044px;">Begin Freq (MHz)</div>
<div class="t " style="left:2080.5px;top:1069.5px;font-size:11px;letter-spacing:-0.018px;">End Freq (MHz)</div>
<div class="t " style="left:2176px;top:1060.5px;font-size:11px;letter-spacing:-0.011px;">RX Gain</div>
<div class="t " style="left:2176px;top:1073.5px;font-size:11px;letter-spacing:-0.070px;">(dB)</div>
<div class="chk" style="left:1616px;top:1093px"></div>
<svg class="a" style="left:1616px;top:1093px" width="13" height="13" viewBox="0 0 13 13"><path d="M2.500 6.500L5.200 9.400L10.500 3.200" fill="none" stroke="#111" stroke-width="1.3"/></svg>
<div class="a" style="left:1656px;top:1092px;width:64px;height:20px;background:#e9e9e9;border:1px solid #6a6a6a;text-align:center;font-size:11px;line-height:19px">0</div>
<div class="a" style="left:1734px;top:1092px;width:64px;height:20px;background:#fff;border:1px solid #5a5a5a;text-align:center;font-size:11px;line-height:19px">144</div>
<div class="spin " style="left:1814px;top:1092px;width:80px;height:20px"><u></u></div><div class="t " style="left:1816.5px;top:1095.5px;font-size:11px;color:#000;letter-spacing:-0.044px;">116,0</div>
<div class="spin " style="left:1902px;top:1092px;width:56px;height:20px"><u></u></div><div class="t " style="left:1904.5px;top:1095.5px;font-size:11px;color:#000;letter-spacing:-0.206px;">0,000</div>
<div class="spin " style="left:1966px;top:1092px;width:96px;height:20px"><u></u></div><div class="t " style="left:1968.5px;top:1095.5px;font-size:11px;color:#000;letter-spacing:-0.212px;">138,000000</div>
<div class="spin " style="left:2070px;top:1092px;width:96px;height:20px"><u></u></div><div class="t " style="left:2072.5px;top:1095.5px;font-size:11px;color:#000;letter-spacing:-0.212px;">149,000000</div>
<div class="spin " style="left:2174px;top:1092px;width:56px;height:20px"><u></u></div><div class="t " style="left:2176.5px;top:1095.5px;font-size:11px;color:#000;letter-spacing:-0.099px;">6,7</div>
<div class="chk" style="left:1616px;top:1117px"></div>
<div class="a" style="left:1656px;top:1116px;width:64px;height:20px;background:#e9e9e9;border:1px solid #6a6a6a;text-align:center;font-size:11px;line-height:19px">1</div>
<div class="a" style="left:1734px;top:1116px;width:64px;height:20px;background:#f0f0f0;border:1px solid #d4d4d4;text-align:center;font-size:11px;line-height:19px;color:#8a8a8a">1</div>
<div class="spin dis" style="left:1814px;top:1116px;width:80px;height:20px"><u></u></div><div class="t " style="left:1816.5px;top:1119.5px;font-size:11px;color:#8c8c8c;letter-spacing:-0.099px;">0,0</div>
<div class="spin dis" style="left:1902px;top:1116px;width:56px;height:20px"><u></u></div><div class="t " style="left:1904.5px;top:1119.5px;font-size:11px;color:#8c8c8c;letter-spacing:-0.206px;">0,000</div>
<div class="spin dis" style="left:1966px;top:1116px;width:96px;height:20px"><u></u></div><div class="t " style="left:1968.5px;top:1119.5px;font-size:11px;color:#8c8c8c;letter-spacing:-0.174px;">0,000000</div>
<div class="spin dis" style="left:2070px;top:1116px;width:96px;height:20px"><u></u></div><div class="t " style="left:2072.5px;top:1119.5px;font-size:11px;color:#8c8c8c;letter-spacing:-0.174px;">0,000000</div>
<div class="spin dis" style="left:2174px;top:1116px;width:56px;height:20px"><u></u></div><div class="t " style="left:2176.5px;top:1119.5px;font-size:11px;color:#8c8c8c;letter-spacing:-0.099px;">0,0</div>
<div class="chk" style="left:1616px;top:1141px"></div>
<div class="a" style="left:1656px;top:1140px;width:64px;height:20px;background:#e9e9e9;border:1px solid #6a6a6a;text-align:center;font-size:11px;line-height:19px">2</div>
<div class="a" style="left:1734px;top:1140px;width:64px;height:20px;background:#f0f0f0;border:1px solid #d4d4d4;text-align:center;font-size:11px;line-height:19px;color:#8a8a8a">2</div>
<div class="spin dis" style="left:1814px;top:1140px;width:80px;height:20px"><u></u></div><div class="t " style="left:1816.5px;top:1143.5px;font-size:11px;color:#8c8c8c;letter-spacing:-0.099px;">0,0</div>
<div class="spin dis" style="left:1902px;top:1140px;width:56px;height:20px"><u></u></div><div class="t " style="left:1904.5px;top:1143.5px;font-size:11px;color:#8c8c8c;letter-spacing:-0.206px;">0,000</div>
<div class="spin dis" style="left:1966px;top:1140px;width:96px;height:20px"><u></u></div><div class="t " style="left:1968.5px;top:1143.5px;font-size:11px;color:#8c8c8c;letter-spacing:-0.174px;">0,000000</div>
<div class="spin dis" style="left:2070px;top:1140px;width:96px;height:20px"><u></u></div><div class="t " style="left:2072.5px;top:1143.5px;font-size:11px;color:#8c8c8c;letter-spacing:-0.174px;">0,000000</div>
<div class="spin dis" style="left:2174px;top:1140px;width:56px;height:20px"><u></u></div><div class="t " style="left:2176.5px;top:1143.5px;font-size:11px;color:#8c8c8c;letter-spacing:-0.099px;">0,0</div>
<div class="win" style="left:65px;top:907px;width:611px;height:260px;border:1px solid #0f5ea6;box-shadow:0 0 12px rgba(0,0,0,0.45)"><div class="wt"></div></div>
<svg class="a" style="left:75px;top:914px" width="16" height="16" viewBox="0 0 16 16"><defs><linearGradient id="ag" x1="0" y1="0" x2="1" y2="1"><stop offset="0" stop-color="#9cc0d0"/><stop offset="0.45" stop-color="#4a88a8"/><stop offset="1" stop-color="#1f5874"/></linearGradient></defs><rect x="0.5" y="0.5" width="15" height="14.500" rx="1.2" fill="url(#ag)" stroke="#1c3c50" stroke-width="0.9"/><path d="M6.500 2.500V9.200M10 1.500V9.200M3.500 9.500H12.800M4.300 6.500Q4.300 9 6.500 9.200" fill="none" stroke="#08121c" stroke-width="1.300"/><rect x="1.500" y="11.300" width="13" height="1.800" fill="#dfe6ec"/><path d="M2.500 12.200H13.500" stroke="#30485a" stroke-width="0.8" stroke-dasharray="2 1"/></svg>
<div class="t " style="left:95px;top:917px;font-size:12px;color:#000;letter-spacing:-0.655px;">HPSDR Setup</div>
<svg class="a" style="left:540px;top:908px" width="135" height="30" viewBox="0 0 135 30"><g stroke="#111" stroke-width="1" fill="none"><path d="M16 14.500H26"/><rect x="61.500" y="9.500" width="9" height="9"/><path d="M107 9.500L117 19.500M117 9.500L107 19.500"/></g></svg>
<div class="a" style="left:75px;top:967px;width:589px;height:200px;border:1px solid #dcdcdc;background:#f0f0f0"></div>
<div class="tab " style="left:76px;top:949px;width:49px;height:18px"></div>
<div class="t " style="left:81.4px;top:953px;font-size:11px;letter-spacing:-0.334px;">General</div>
<div class="tab " style="left:124px;top:949px;width:42px;height:18px"></div>
<div class="t " style="left:130.6px;top:953px;font-size:11px;letter-spacing:-0.368px;">Audio</div>
<div class="tab sel" style="left:164px;top:946px;width:52px;height:22px"></div>
<div class="t " style="left:173.3px;top:951px;font-size:11px;letter-spacing:-0.468px;">Display</div>
<div class="tab " style="left:214px;top:949px;width:41px;height:18px"></div>
<div class="t " style="left:219.2px;top:953px;font-size:11px;letter-spacing:-0.442px;">DSP</div>
<div class="tab " style="left:254px;top:949px;width:53px;height:18px"></div>
<div class="t " style="left:261.6px;top:953px;font-size:11px;letter-spacing:-0.497px;">Transmit</div>
<div class="tab " style="left:306px;top:949px;width:68px;height:18px"></div>
<div class="t " style="left:313.4px;top:953px;font-size:11px;letter-spacing:-0.206px;">PA Settings</div>
<div class="tab " style="left:373px;top:949px;width:71px;height:18px"></div>
<div class="t " style="left:380px;top:953px;font-size:11px;letter-spacing:-0.223px;">Appearance</div>
<div class="tab " style="left:443px;top:949px;width:59px;height:18px"></div>
<div class="t " style="left:450.3px;top:953px;font-size:11px;letter-spacing:-0.387px;">Keyboard</div>
<div class="tab " style="left:501px;top:949px;width:70px;height:18px"></div>
<div class="t " style="left:506.4px;top:953px;font-size:11px;letter-spacing:-0.247px;">CAT Control</div>
<div class="tab " style="left:570px;top:949px;width:41px;height:18px"></div>
<div class="t " style="left:576.6px;top:953px;font-size:11px;letter-spacing:-0.217px;">Tests</div>
<div class="a" style="left:81px;top:992px;width:581px;height:175px;border:1px solid #dcdcdc;background:#f0f0f0"></div>
<div class="tab " style="left:83px;top:975px;width:48px;height:18px"></div>
<div class="t " style="left:88.6px;top:979px;font-size:11px;letter-spacing:-0.334px;">General</div>
<div class="tab sel" style="left:130px;top:972px;width:46px;height:21px"></div>
<div class="t " style="left:141.5px;top:977px;font-size:11px;letter-spacing:-0.367px;">RX 1</div>
<div class="tab " style="left:175px;top:975px;width:41px;height:18px"></div>
<div class="t " style="left:183.5px;top:979px;font-size:11px;letter-spacing:-0.117px;">RX 2</div>
<div class="tab " style="left:214.5px;top:975px;width:41px;height:18px"></div>
<div class="t " style="left:228.0px;top:979px;font-size:11px;letter-spacing:-0.031px;">TX</div>
<div class="grp" style="left:91px;top:1006px;width:260px;height:121px"></div><div class="a" style="left:98px;top:1005px;width:108px;height:3px;background:#f0f0f0"></div><div class="t " style="left:100px;top:1001px;font-size:11px;letter-spacing:-0.357px;">Fast Fourier Transform</div>
<div class="t " style="left:211px;top:1015px;font-size:11px;letter-spacing:0.148px;">Size</div>
<div class="a" style="left:127px;top:1032px;width:185px;height:32px;background:#000"></div>
<div class="a" style="left:135px;top:1040px;width:160px;height:4px;background:#e8e8e8;border-top:1px solid #fff;border-radius:1px"></div>
<svg class="a" style="left:292px;top:1034px" width="13" height="20" viewBox="0 0 13 20"><path d="M0.500 0.500H11.500V13.500L6 19L0.500 13.500Z" fill="#0a78d8" stroke="#0a6ac0" stroke-width="0.8"/></svg>
<div class="a" style="left:140.0px;top:1054px;width:1px;height:4px;background:#d8d8d8"></div>
<div class="a" style="left:166.3px;top:1054px;width:1px;height:4px;background:#d8d8d8"></div>
<div class="a" style="left:192.7px;top:1054px;width:1px;height:4px;background:#d8d8d8"></div>
<div class="a" style="left:219.1px;top:1054px;width:1px;height:4px;background:#d8d8d8"></div>
<div class="a" style="left:245.4px;top:1054px;width:1px;height:4px;background:#d8d8d8"></div>
<div class="a" style="left:271.8px;top:1054px;width:1px;height:4px;background:#d8d8d8"></div>
<div class="a" style="left:298.1px;top:1054px;width:1px;height:4px;background:#d8d8d8"></div>
<div class="t " style="left:99.5px;top:1042.5px;font-size:11px;letter-spacing:-0.245px;">Min</div>
<div class="t " style="left:320px;top:1042.5px;font-size:11px;letter-spacing:-0.094px;">Max</div>
<div class="t " style="left:99.5px;top:1080.5px;font-size:11px;letter-spacing:-0.029px;">Bin Width (Hz)</div>
<div class="a" style="left:178px;top:1079px;width:34px;height:19px;background:#ffe4c4;border:1px solid #f4d8b8"></div>
<div class="t " style="left:181.5px;top:1082px;font-size:11px;letter-spacing:-0.206px;">1,465</div>
<div class="t " style="left:99.5px;top:1102.5px;font-size:11px;letter-spacing:-0.104px;">Window</div>
<div class="cmb" style="left:174px;top:1101px;width:121px;height:21px;font-size:11px"><span>Kaiser</span><svg width="9" height="6" viewBox="0 0 9 6"><path d="M0.5 0.8 L4.5 4.8 L8.5 0.8" fill="none" stroke="#333" stroke-width="1.1"/></svg></div>
<div class="grp" style="left:91px;top:1141px;width:123px;height:40px"></div><div class="a" style="left:98px;top:1140px;width:59px;height:3px;background:#f0f0f0"></div><div class="t " style="left:100px;top:1136px;font-size:11px;letter-spacing:-0.189px;">Panadapter</div>
<div class="t " style="left:103.5px;top:1153px;font-size:11px;letter-spacing:-0.071px;">Detector:</div>
<div class="grp" style="left:229px;top:1141px;width:122px;height:40px"></div><div class="a" style="left:236px;top:1140px;width:45px;height:3px;background:#f0f0f0"></div><div class="t " style="left:238px;top:1136px;font-size:11px;letter-spacing:-0.222px;">Waterfall</div>
<div class="t " style="left:240.5px;top:1153px;font-size:11px;letter-spacing:-0.071px;">Detector:</div>
<div class="grp" style="left:382px;top:1006px;width:255px;height:170px"></div><div class="a" style="left:389px;top:1005px;width:45px;height:3px;background:#f0f0f0"></div><div class="t " style="left:391px;top:1001px;font-size:11px;letter-spacing:-0.222px;">Waterfall</div>
<div class="t " style="left:391px;top:1021.5px;font-size:11px;letter-spacing:-0.005px;">Low Level</div>
<div class="spin dis" style="left:453px;top:1016px;width:48px;height:20px"><u></u></div><div class="t " style="left:455.5px;top:1019.5px;font-size:11px;color:#8c8c8c;letter-spacing:-0.258px;">-140</div>
<div class="t " style="left:391px;top:1044.5px;font-size:11px;letter-spacing:0.002px;">High Level</div>
<div class="spin " style="left:453px;top:1042px;width:48px;height:20px"><u></u></div><div class="t " style="left:455.5px;top:1045.5px;font-size:11px;color:#000;letter-spacing:-0.302px;">-80</div>
<div class="chk" style="left:520px;top:1049px"></div>
<svg class="a" style="left:520px;top:1049px" width="13" height="13" viewBox="0 0 13 13"><path d="M2.500 6.500L5.200 9.400L10.500 3.200" fill="none" stroke="#111" stroke-width="1.3"/></svg>
<div class="t " style="left:537px;top:1049.5px;font-size:11px;letter-spacing:0.094px;">Waterfall AGC</div>
<div class="t " style="left:391px;top:1079.5px;font-size:11px;letter-spacing:-0.036px;">Palette</div>
<div class="cmb" style="left:435px;top:1076px;width:72px;height:20px;font-size:11px"><span>BlackWhit</span><svg width="9" height="6" viewBox="0 0 9 6"><path d="M0.5 0.8 L4.5 4.8 L8.5 0.8" fill="none" stroke="#333" stroke-width="1.1"/></svg></div>
<div class="t " style="left:391px;top:1102px;font-size:11px;letter-spacing:0.003px;">Update</div>
<div class="t " style="left:391px;top:1115px;font-size:11px;letter-spacing:0.049px;">Period (ms):</div>
<div class="spin " style="left:453px;top:1102px;width:48px;height:20px"><u></u></div><div class="t " style="left:455.5px;top:1105.5px;font-size:11px;color:#000;letter-spacing:-0.125px;">40</div>
<div class="t " style="left:391px;top:1139.5px;font-size:11px;letter-spacing:0.003px;">Band for Low/High Levels:</div>
<div class="a" style="left:529px;top:1135px;width:94px;height:20px;background:#f0f0f0;border:1px solid #6a6a6a"></div>
<div class="t " style="left:532px;top:1139.5px;font-size:11px;letter-spacing:-0.351px;">2M &amp; VHF+</div>
</body></html>
